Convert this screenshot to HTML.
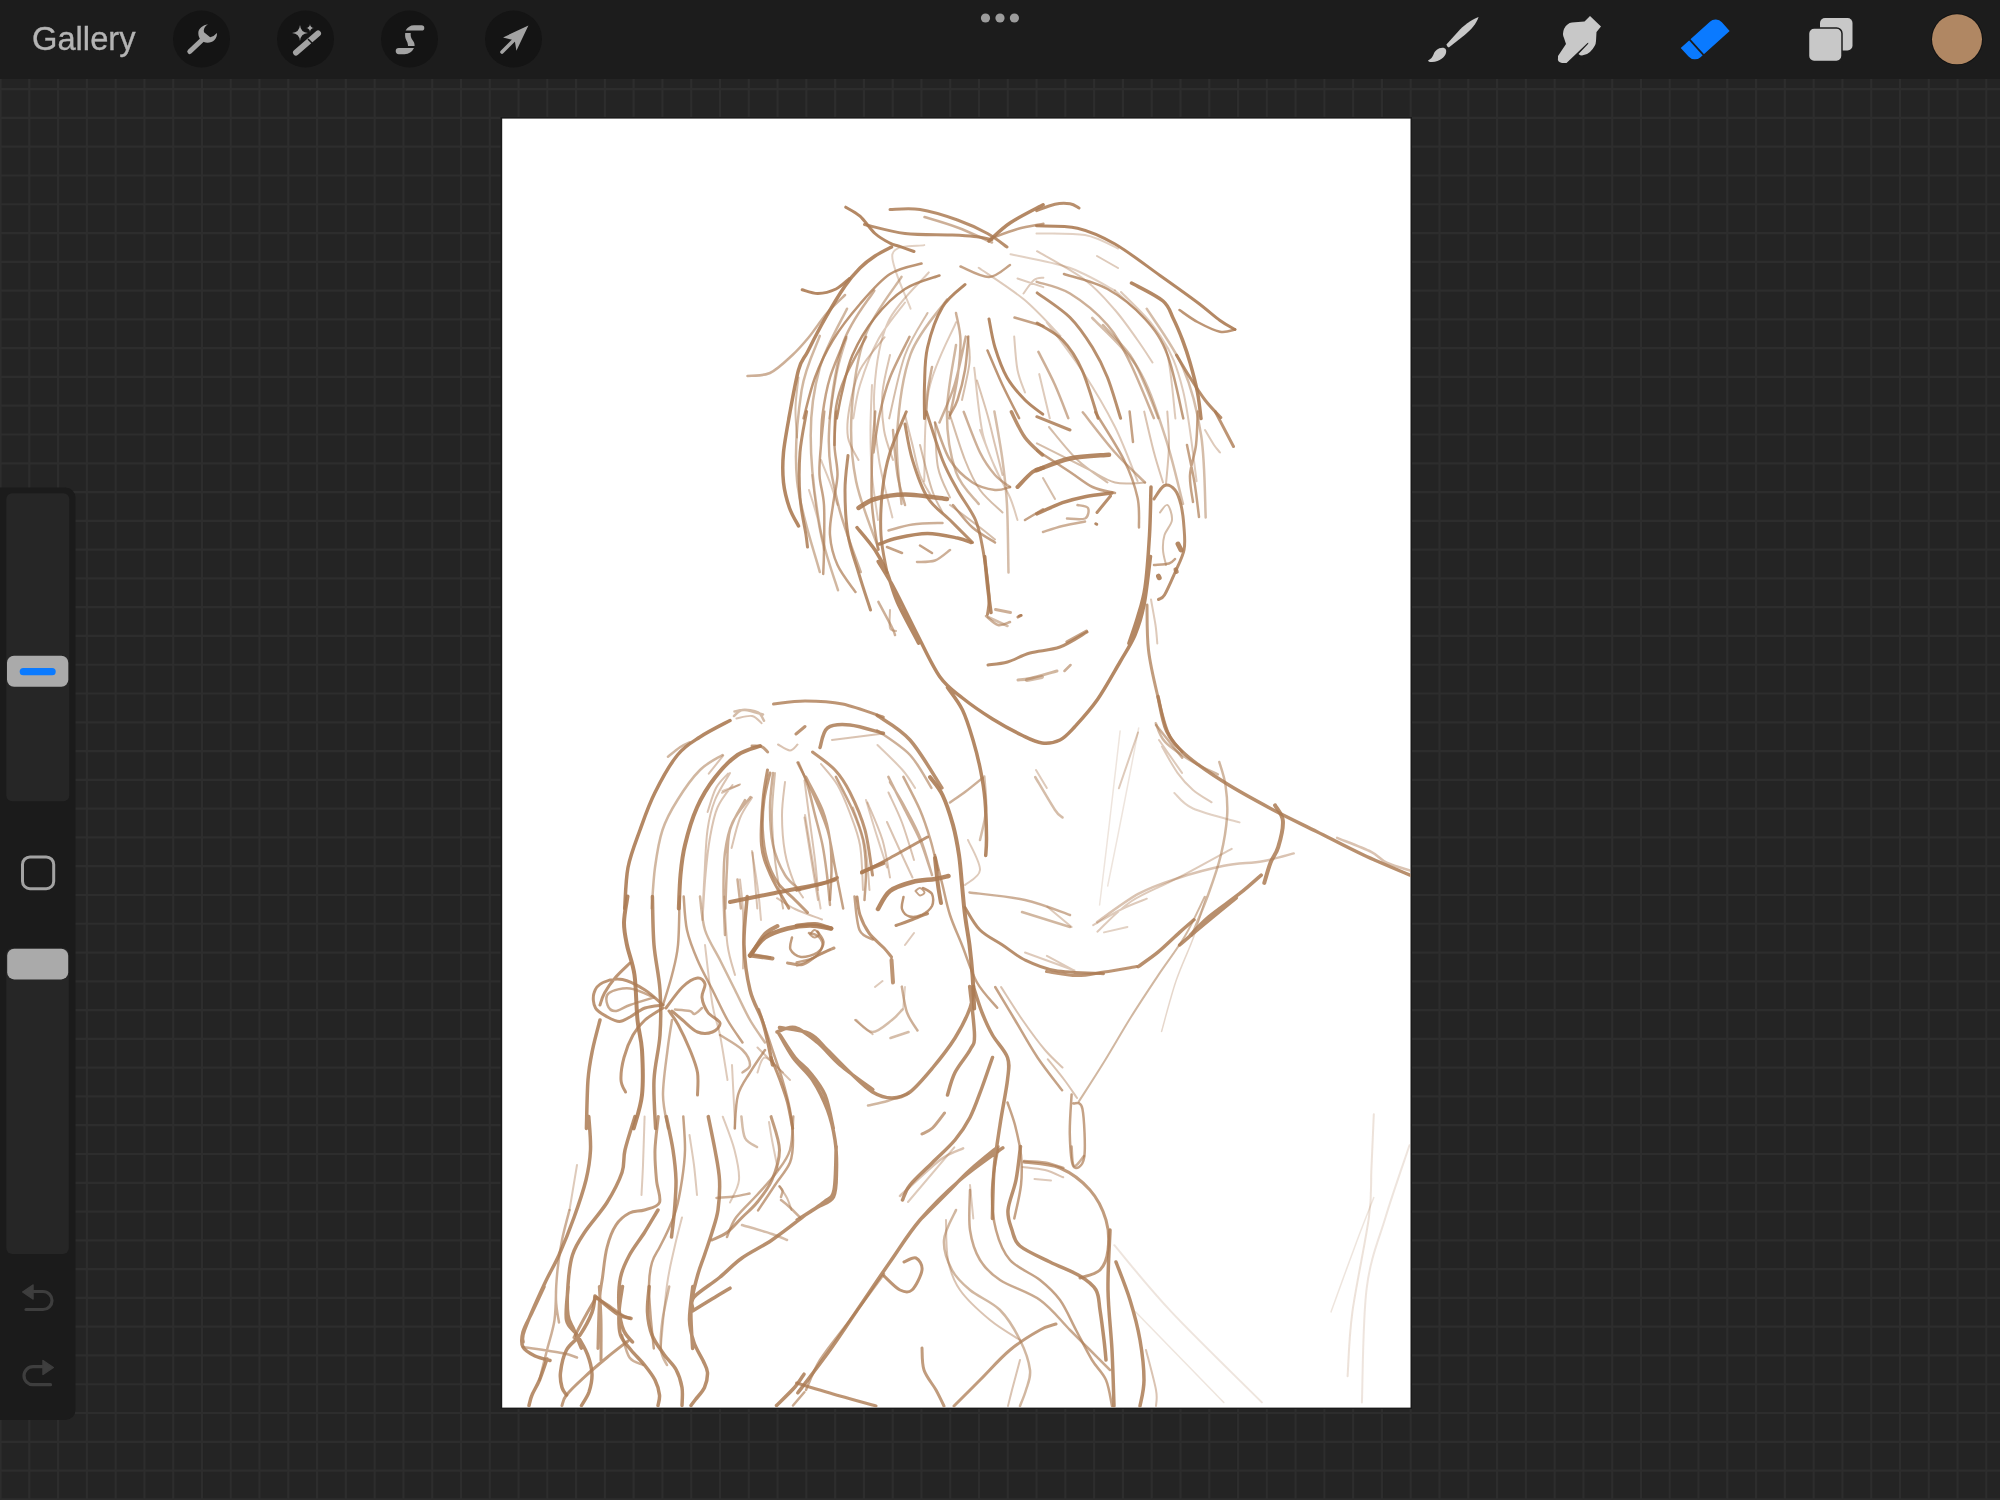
<!DOCTYPE html>
<html><head><meta charset="utf-8">
<style>
html,body{margin:0;padding:0;width:2000px;height:1500px;overflow:hidden;background:#242424;}
body{position:relative;font-family:"Liberation Sans",sans-serif;}
svg{position:absolute;left:0;top:0;}
</style></head><body>
<svg width="2000" height="1500" viewBox="0 0 2000 1500">
<rect x="0" y="0" width="2000" height="1500" fill="#242424"/>
<path d="M0.50 79V1500M29.28 79V1500M58.06 79V1500M86.84 79V1500M115.62 79V1500M144.40 79V1500M173.18 79V1500M201.96 79V1500M230.74 79V1500M259.52 79V1500M288.30 79V1500M317.08 79V1500M345.86 79V1500M374.64 79V1500M403.42 79V1500M432.20 79V1500M460.98 79V1500M489.76 79V1500M518.54 79V1500M547.32 79V1500M576.10 79V1500M604.88 79V1500M633.66 79V1500M662.44 79V1500M691.22 79V1500M720.00 79V1500M748.78 79V1500M777.56 79V1500M806.34 79V1500M835.12 79V1500M863.90 79V1500M892.68 79V1500M921.46 79V1500M950.24 79V1500M979.02 79V1500M1007.80 79V1500M1036.58 79V1500M1065.36 79V1500M1094.14 79V1500M1122.92 79V1500M1151.70 79V1500M1180.48 79V1500M1209.26 79V1500M1238.04 79V1500M1266.82 79V1500M1295.60 79V1500M1324.38 79V1500M1353.16 79V1500M1381.94 79V1500M1410.72 79V1500M1439.50 79V1500M1468.28 79V1500M1497.06 79V1500M1525.84 79V1500M1554.62 79V1500M1583.40 79V1500M1612.18 79V1500M1640.96 79V1500M1669.74 79V1500M1698.52 79V1500M1727.30 79V1500M1756.08 79V1500M1784.86 79V1500M1813.64 79V1500M1842.42 79V1500M1871.20 79V1500M1899.98 79V1500M1928.76 79V1500M1957.54 79V1500M1986.32 79V1500M0 89.14H2000M0 117.92H2000M0 146.70H2000M0 175.48H2000M0 204.26H2000M0 233.04H2000M0 261.82H2000M0 290.60H2000M0 319.38H2000M0 348.16H2000M0 376.94H2000M0 405.72H2000M0 434.50H2000M0 463.28H2000M0 492.06H2000M0 520.84H2000M0 549.62H2000M0 578.40H2000M0 607.18H2000M0 635.96H2000M0 664.74H2000M0 693.52H2000M0 722.30H2000M0 751.08H2000M0 779.86H2000M0 808.64H2000M0 837.42H2000M0 866.20H2000M0 894.98H2000M0 923.76H2000M0 952.54H2000M0 981.32H2000M0 1010.10H2000M0 1038.88H2000M0 1067.66H2000M0 1096.44H2000M0 1125.22H2000M0 1154.00H2000M0 1182.78H2000M0 1211.56H2000M0 1240.34H2000M0 1269.12H2000M0 1297.90H2000M0 1326.68H2000M0 1355.46H2000M0 1384.24H2000M0 1413.02H2000M0 1441.80H2000M0 1470.58H2000M0 1499.36H2000" stroke="#2d2d2d" stroke-width="2.2" fill="none"/>
<!-- top bar -->
<rect x="0" y="0" width="2000" height="79" fill="#1c1c1c"/>
<circle cx="201.5" cy="39" r="28.5" fill="#141414"/>
<circle cx="305.5" cy="39" r="28.5" fill="#141414"/>
<circle cx="409.5" cy="39" r="28.5" fill="#141414"/>
<circle cx="513.5" cy="39" r="28.5" fill="#141414"/>
<!-- wrench -->
<g fill="#a3a3a3">
<line x1="189.8" y1="51.5" x2="202" y2="40" stroke="#a3a3a3" stroke-width="5" stroke-linecap="round"/>
<path d="M207.9 24.3 C203 25 198.3 28.5 198.3 33 C198.3 39 202.5 42.8 207.5 42.8 C213 42.8 217.5 38.5 216.9 33 Q214 36.5 210.2 37.3 L204 32.3 C203.2 29.5 204.5 26.5 207.9 24.3Z"/>
</g>
<!-- wand -->
<g>
<line x1="296" y1="52.5" x2="318" y2="33.5" stroke="#a3a3a3" stroke-width="6" stroke-linecap="round"/>
<line x1="308" y1="39" x2="312.5" y2="43.5" stroke="#141414" stroke-width="1.5"/>
<path d="M300 25 Q300.6 32.4 308 33 Q300.6 33.6 300 41 Q299.4 33.6 292 33 Q299.4 32.4 300 25Z" fill="#a3a3a3"/>
<path d="M310 24 Q310.3 27.7 314 28 Q310.3 28.3 310 32 Q309.7 28.3 306 28 Q309.7 27.7 310 24Z" fill="#a3a3a3"/>
</g>
<!-- selection S -->
<g fill="#a3a3a3">
<path d="M405.6 30.6 Q408.5 25.3 414 25.2 L421.6 25.2 A2.7 2.7 0 0 1 421.6 30.6 Z"/>
<path d="M405.2 33 L410.7 33 C410.5 36.5 411 38 412.5 40 C414 42 414.7 43.5 414.6 45.9 L408 45.9 C408 43.5 407 41.5 406.2 40 C405 37.5 405 35.5 405.2 33 Z"/>
<path d="M398.8 48 L414 48 Q411 54 404.5 54.2 L398.8 54.2 A3.1 3.1 0 0 1 398.8 48 Z"/>
</g>
<!-- transform arrow -->
<g>
<line x1="502" y1="52" x2="513" y2="41" stroke="#a3a3a3" stroke-width="3.6" stroke-linecap="round"/>
<path d="M528.4 25.4 L503 37.5 L512 39.8 L515 42 L516.4 50.8 Z" fill="#a3a3a3"/>
</g>
<!-- dots -->
<circle cx="985.5" cy="18" r="4.6" fill="#9c9c9c"/>
<circle cx="1000" cy="18" r="4.6" fill="#9c9c9c"/>
<circle cx="1014.4" cy="18" r="4.6" fill="#9c9c9c"/>
<!-- brush -->
<g fill="#c8c8c8">
<path d="M1478.6 17 C1474 18.5 1466 23.5 1460 29.5 L1446.4 44.6 Q1447 47 1448.8 47.4 L1465 34.8 C1471 29.8 1476.5 23.5 1478.6 17 Z"/>
<path d="M1428 60.5 C1431 59 1432.5 57 1433.5 54.5 C1435 50.5 1438 48 1442.5 47.8 C1445.5 47.8 1446.8 50 1446 53 C1445 57 1440 61.5 1432 62 C1430 62.2 1428.5 61.6 1428 60.5 Z"/>
</g>
<!-- smudge -->
<path fill="#c8c8c8" d="M1558 58 Q1557 62 1562 63 L1566.5 63 L1587.5 43 Q1589 42 1588 44 L1578.5 54 Q1580 55.5 1582 55.5 Q1587 55 1590 52 Q1596 46 1596 41 L1596.5 32 L1601 26.5 L1590 16 L1584.5 21.5 L1572 22.5 Q1567 23 1564 29 Q1562 34 1564 38 L1566 44 L1558 56 Z"/>
<!-- eraser -->
<g transform="translate(1705.2 39.4) rotate(-42) scale(1.06)">
<path fill="#0a7aff" d="M-22.5 -9.5 L14.5 -9.5 A8 8 0 0 1 22.5 -1.5 L22.5 9.5 L-14.5 9.5 A8 8 0 0 1 -22.5 1.5 Z"/>
<line x1="-11" y1="-10" x2="-11" y2="10" stroke="#1c1c1c" stroke-width="1.6"/>
</g>
<!-- layers -->
<rect x="1820" y="18" width="32.5" height="32.5" rx="5" fill="#c8c8c8"/>
<rect x="1808.5" y="28" width="33.5" height="33.5" rx="5.5" fill="#c8c8c8" stroke="#1c1c1c" stroke-width="1.5"/>
<!-- color -->
<circle cx="1957" cy="39.3" r="26" fill="#121212"/>
<circle cx="1957" cy="39.3" r="25" fill="#b08763"/>
<!-- sidebar -->
<rect x="-12" y="487.5" width="87.5" height="932.5" rx="10" fill="#1b1b1b"/>
<rect x="6.3" y="493.3" width="63" height="308" rx="6" fill="#262626"/>
<rect x="7" y="655.8" width="61.3" height="31" rx="7" fill="#aaaaaa"/>
<rect x="19.7" y="668" width="36" height="7.3" rx="3.6" fill="#0a7aff"/>
<rect x="22.5" y="856.9" width="31.2" height="31.8" rx="7.5" fill="none" stroke="#a3a3a3" stroke-width="3"/>
<rect x="6.3" y="948" width="62.5" height="306" rx="6" fill="#262626"/>
<rect x="7.2" y="948.7" width="61" height="30.7" rx="7" fill="#aaaaaa"/>
<g fill="none" stroke="#3e3e3e" stroke-width="3.2" stroke-linecap="round">
<path d="M26 1309.5 L43 1309.5 A9 9 0 0 0 43 1291.5 L32 1291.5"/>
<path d="M50.5 1384.7 L33 1384.7 A9 9 0 0 1 33 1366.7 L44 1366.7"/>
</g>
<path d="M22.7 1292 L33 1285 L33 1299 Z" fill="#3e3e3e" stroke="#3e3e3e" stroke-width="1.5" stroke-linejoin="round"/>
<path d="M53.3 1367.5 L43 1360.5 L43 1374.5 Z" fill="#3e3e3e" stroke="#3e3e3e" stroke-width="1.5" stroke-linejoin="round"/>
<!-- canvas -->
<rect x="500.5" y="117" width="911.5" height="1292" fill="#1a1a1a"/>
<rect x="502.2" y="118.6" width="908.3" height="1289" fill="#ffffff"/>
<defs><filter id="sb" x="-5%" y="-5%" width="110%" height="110%"><feGaussianBlur stdDeviation="0.5"/></filter></defs><g clip-path="url(#cv)"><g filter="url(#sb)"><defs><clipPath id="cv"><rect x="502.2" y="118.6" width="908.3" height="1289"/></clipPath></defs>
<path fill="none" stroke="#ac7b53" stroke-width="3" stroke-opacity="0.9" stroke-linecap="round" stroke-linejoin="round" d="M845.7 207.2C848.1 208.7 855.1 211.9 860.0 216.2C864.9 220.6 870.0 229.0 875.0 233.5C880.0 238.0 886.0 241.1 890.0 243.2C894.0 245.4 895.0 244.9 899.0 246.2C903.0 247.6 911.5 250.6 914.0 251.5M802.2 289.7C804.9 290.4 812.4 293.6 818.0 293.5C823.6 293.4 830.7 291.5 836.0 289.0C841.2 286.5 847.2 280.2 849.5 278.5M965.0 284.5C961.2 288.2 948.7 296.5 942.5 307.0C936.2 317.5 930.5 334.5 927.5 347.5C924.5 360.5 925.0 373.2 924.5 385.0C924.0 396.8 924.5 412.9 924.5 418.5M989.0 319.0C990.0 323.7 992.0 337.7 995.0 347.5C998.0 357.2 1002.0 368.7 1007.0 377.5C1012.0 386.2 1019.0 393.9 1025.0 400.0C1031.0 406.1 1039.8 411.8 1042.7 414.2M1036.5 225.8C1043.3 226.2 1064.4 225.2 1077.5 228.2C1090.6 231.3 1101.2 236.1 1115.0 244.0C1128.7 251.9 1146.2 265.7 1160.0 275.5C1173.7 285.2 1187.5 295.0 1197.5 302.5C1207.5 310.0 1213.7 316.0 1220.0 320.5C1226.2 325.0 1232.5 328.0 1235.0 329.5M1095.8 523.7L1096.7 524.2"/>
<path fill="none" stroke="#ac7b53" stroke-width="3.5" stroke-opacity="0.9" stroke-linecap="round" stroke-linejoin="round" d="M891.5 247.0C888.7 248.5 880.2 252.5 875.0 256.0C869.7 259.5 865.0 263.0 860.0 268.0C855.0 273.0 851.0 277.2 845.0 286.0C839.0 294.7 830.2 309.5 824.0 320.5C817.7 331.5 811.7 343.7 807.5 352.0C803.2 360.2 801.6 358.9 798.5 370.0C795.4 381.1 790.4 410.4 788.8 418.4M989.0 241.0C992.5 238.0 1001.0 229.0 1010.0 223.0C1019.0 217.0 1037.6 207.8 1043.1 204.8M1131.5 283.0C1136.7 286.0 1156.0 295.0 1163.0 301.0C1170.0 307.0 1170.2 312.5 1173.5 319.0C1176.7 325.5 1179.7 332.7 1182.5 340.0C1185.2 347.2 1187.5 353.7 1190.0 362.5C1192.5 371.2 1195.7 383.2 1197.5 392.5C1199.3 401.8 1200.4 414.1 1201.0 418.5M790.1 411.5C789.0 418.4 784.6 440.7 783.5 452.5C782.4 464.3 782.5 473.2 783.5 482.5C784.5 491.7 787.0 500.7 789.5 508.0C792.0 515.2 797.0 523.0 798.5 526.0M857.0 527.5C860.0 531.2 870.0 542.5 875.0 550.0C880.0 557.5 883.2 563.7 887.0 572.5C890.7 581.2 892.2 590.7 897.5 602.5C902.8 614.3 915.1 636.3 918.6 643.1M879.5 544.0C882.5 543.0 889.5 539.7 897.5 538.0C905.5 536.2 917.5 533.5 927.5 533.5C937.5 533.5 950.2 536.5 957.5 538.0C964.7 539.5 968.7 541.7 971.0 542.5M1036.8 513.9C1041.1 512.0 1054.5 505.6 1062.5 502.7C1070.5 499.9 1076.7 498.4 1085.0 496.7C1093.2 495.1 1107.5 493.6 1112.0 493.0M1151.0 487.0C1150.7 495.0 1150.5 518.2 1149.5 535.0C1148.5 551.7 1147.0 573.7 1145.0 587.5C1143.0 601.2 1140.2 608.2 1137.5 617.5C1134.8 626.8 1130.3 639.0 1128.9 643.3M878.2 561.5C881.0 566.2 888.5 577.7 895.0 590.0C901.5 602.3 910.0 620.5 917.5 635.0C925.0 649.5 932.5 666.5 940.0 677.0C947.5 687.5 953.7 691.0 962.5 698.0C971.2 705.0 982.5 712.7 992.5 719.0C1002.5 725.2 1014.2 731.5 1022.5 735.5C1030.7 739.5 1035.7 742.2 1042.0 743.0C1048.2 743.7 1054.5 742.7 1060.0 740.0C1065.5 737.2 1068.7 733.2 1075.0 726.5C1081.2 719.7 1090.0 710.2 1097.5 699.5C1105.0 688.7 1113.7 672.7 1120.0 662.0C1126.2 651.2 1131.0 644.5 1135.0 635.0C1139.0 625.5 1141.4 618.1 1144.0 605.0C1146.6 591.9 1149.4 564.6 1150.5 556.5M947.5 687.5C950.0 691.2 958.2 701.2 962.5 710.0C966.7 718.7 970.0 730.0 973.0 740.0C976.0 750.0 978.5 760.0 980.5 770.0C982.5 780.0 984.0 788.7 985.0 800.0C986.0 811.2 986.4 828.2 986.5 837.5C986.6 846.7 985.9 852.5 985.7 855.5M984.7 556.5C985.2 562.1 986.9 580.7 988.0 590.0C989.1 599.3 990.5 608.7 991.0 612.5M730.0 720.5C725.0 723.2 708.7 731.2 700.0 737.0C691.2 742.7 685.0 745.7 677.5 755.0C670.0 764.2 661.2 780.0 655.0 792.5C648.7 805.0 644.5 817.5 640.0 830.0C635.5 842.5 630.5 854.4 628.0 867.5C625.5 880.6 625.3 901.7 624.7 908.5"/>
<path fill="none" stroke="#ac7b53" stroke-width="2.5" stroke-opacity="0.6" stroke-linecap="round" stroke-linejoin="round" d="M747.5 376.0C751.2 375.5 762.5 376.5 770.0 373.0C777.5 369.5 786.0 361.0 792.5 355.0C799.0 349.0 803.2 344.0 809.0 337.0C814.7 330.0 821.0 320.0 827.0 313.0C833.0 306.0 842.0 298.0 845.0 295.0M924.5 217.0C930.0 218.7 946.2 223.2 957.5 227.5C968.7 231.7 986.2 240.0 992.0 242.5M956.0 313.0C956.7 317.5 960.2 329.2 960.5 340.0C960.7 350.7 959.4 364.4 957.5 377.5C955.6 390.6 950.7 411.6 949.3 418.4M965.8 336.6C963.9 344.7 958.9 370.7 954.5 385.0C950.1 399.3 942.0 416.2 939.5 422.5M932.0 367.0C931.2 371.2 928.5 384.5 927.5 392.5C926.5 400.5 926.2 411.2 926.0 415.0M874.3 290.5C869.0 299.6 850.1 320.8 842.5 345.0C834.9 369.2 829.6 409.3 828.9 435.8C828.1 462.3 832.7 481.2 838.0 503.9C843.3 526.6 856.9 560.7 860.7 572.0M1036.7 281.8C1042.2 283.8 1058.2 286.3 1070.0 293.5C1081.8 300.7 1097.5 313.5 1107.5 325.0C1117.5 336.5 1122.3 347.0 1130.0 362.5C1137.7 378.0 1149.9 408.9 1153.9 418.2M1038.4 351.9C1041.2 357.4 1050.0 373.9 1055.0 385.0C1060.0 396.1 1066.1 412.7 1068.3 418.2M888.5 530.5C892.5 529.5 903.5 525.7 912.5 524.5C921.5 523.2 937.5 523.2 942.5 523.0M917.0 562.0C920.0 561.7 929.5 562.5 935.0 560.5C940.5 558.5 947.5 551.7 950.0 550.0M963.7 411.8C966.4 418.5 974.8 442.0 980.0 452.5C985.2 463.0 990.0 469.2 995.0 475.0C1000.0 480.7 1007.5 485.0 1010.0 487.0M986.0 616.0C988.0 617.5 994.0 624.0 998.0 625.0C1002.0 626.0 1008.0 622.5 1010.0 622.0M893.0 430.0C893.7 437.5 895.5 462.5 897.5 475.0C899.5 487.5 903.7 500.0 905.0 505.0M1077.5 505.0C1079.2 505.5 1086.7 505.7 1088.0 508.0C1089.2 510.2 1088.5 516.7 1085.0 518.5C1081.5 520.2 1070.0 518.5 1067.0 518.5M1043.0 532.0C1046.2 531.0 1055.5 527.7 1062.5 526.0C1069.5 524.2 1081.2 522.2 1085.0 521.5M1082.8 412.3C1088.2 419.0 1104.6 440.8 1115.0 452.5C1125.4 464.2 1140.0 477.5 1145.0 482.5M1064.5 671.0L1070.5 665.0M878.4 601.9C880.6 606.2 889.2 622.0 892.0 627.5C894.8 633.0 894.5 633.7 895.0 635.0M877.2 730.4C882.7 734.5 901.0 745.4 910.0 755.0C919.0 764.6 927.8 782.4 931.4 787.9M1156.0 725.0L1182.2 757.7M745.0 800.0C742.5 805.0 733.0 818.7 730.0 830.0C727.0 841.2 727.8 854.4 727.0 867.5C726.2 880.6 725.6 901.7 725.4 908.5M737.5 879.5L740.9 908.5M969.5 892.5C978.7 893.7 1008.2 896.2 1025.0 900.0C1041.7 903.7 1062.5 912.5 1070.0 915.0M888.4 776.9C891.2 782.4 899.7 799.5 905.0 810.0C910.3 820.5 915.7 830.0 920.0 840.0C924.2 850.0 928.7 865.0 930.5 870.0M950.0 802.5C952.5 800.7 959.5 796.1 965.0 792.0C970.5 787.9 979.8 780.2 982.7 777.8M750.5 797.0C747.5 801.2 736.7 813.2 732.5 822.5C728.2 831.7 726.5 841.2 725.0 852.5C723.5 863.7 723.5 876.2 723.5 890.0C723.5 903.7 724.7 927.5 725.0 935.0M773.0 773.0C772.5 778.7 770.0 795.5 770.0 807.5C770.0 819.5 770.5 833.7 773.0 845.0C775.5 856.2 780.5 867.5 785.0 875.0C789.5 882.5 797.5 887.5 800.0 890.0M890.0 782.0C892.5 786.2 900.0 798.2 905.0 807.5C910.0 816.7 915.5 826.2 920.0 837.5C924.5 848.7 930.0 868.7 932.0 875.0M675.0 1009.5C677.5 1009.7 686.7 1010.2 690.0 1011.0C693.2 1011.7 692.5 1014.5 694.5 1014.0C696.5 1013.5 700.7 1009.0 702.0 1008.0M720.0 1035.0C723.7 1037.5 737.5 1045.0 742.5 1050.0C747.5 1055.0 750.0 1061.2 750.0 1065.0C750.0 1068.7 743.7 1071.2 742.5 1072.5M672.0 1020.0C671.2 1025.0 669.0 1037.5 667.5 1050.0C666.0 1062.5 662.9 1081.9 663.0 1095.0C663.1 1108.1 667.2 1122.9 668.0 1128.5M901.8 986.6C902.7 990.9 904.4 1005.2 907.0 1012.5C909.6 1019.8 915.7 1027.5 917.5 1030.5M779.5 1186.5C780.0 1187.2 782.2 1189.2 782.5 1191.0C782.7 1192.7 781.2 1196.0 781.0 1197.0M781.0 1200.0C782.5 1201.2 786.8 1204.6 790.0 1207.5C793.2 1210.4 798.3 1215.8 800.0 1217.5M569.5 1210.0C568.2 1215.0 564.0 1230.0 562.0 1240.0C560.0 1250.0 558.5 1260.0 557.5 1270.0C556.5 1280.0 555.7 1291.2 556.0 1300.0C556.2 1308.7 558.5 1318.7 559.0 1322.5M716.5 1198.0C719.5 1197.7 729.0 1197.2 734.5 1196.5C740.0 1195.7 747.0 1194.0 749.5 1193.5M1071.6 1146.5C1072.0 1149.8 1071.9 1164.4 1074.0 1166.0C1076.1 1167.6 1082.3 1157.7 1084.0 1156.0M556.2 1286.5C555.9 1292.1 556.0 1309.4 554.5 1320.0C553.0 1330.6 549.5 1340.0 547.0 1350.0C544.5 1360.0 540.7 1375.0 539.5 1380.0M523.0 1347.0C529.5 1348.0 553.0 1351.2 562.0 1353.0C571.0 1354.7 574.5 1356.7 577.0 1357.5M622.0 1335.0C623.2 1338.7 626.0 1352.5 629.5 1357.5C633.0 1362.5 640.7 1363.7 643.0 1365.0"/>
<path fill="none" stroke="#ac7b53" stroke-width="3" stroke-opacity="0.85" stroke-linecap="round" stroke-linejoin="round" d="M890.0 209.5C895.0 209.5 908.7 207.7 920.0 209.5C931.2 211.2 946.2 216.0 957.5 220.0C968.7 224.0 979.2 229.0 987.5 233.5C995.7 238.0 1003.7 244.7 1007.0 247.0M864.5 224.5C871.2 226.0 890.7 231.7 905.0 233.5C919.2 235.2 938.5 234.5 950.0 235.0C961.5 235.5 967.0 235.7 974.0 236.5C981.0 237.2 989.0 239.0 992.0 239.5M1036.7 210.7C1039.7 209.6 1049.4 205.4 1055.0 204.2C1060.6 203.1 1066.0 203.2 1070.0 203.8C1074.0 204.4 1077.5 207.3 1079.0 208.0M1176.5 355.0C1178.7 358.7 1185.2 370.0 1190.0 377.5C1194.7 385.0 1199.9 393.3 1205.0 400.0C1210.1 406.7 1218.2 414.7 1220.8 417.6M1037.2 292.9C1042.7 297.0 1060.8 308.4 1070.0 317.5C1079.2 326.6 1086.2 337.5 1092.5 347.5C1098.7 357.5 1102.8 365.7 1107.5 377.5C1112.2 389.3 1118.4 411.5 1120.6 418.3M1037.1 323.1C1041.3 325.9 1055.0 332.2 1062.5 340.0C1070.0 347.8 1076.1 356.9 1082.0 370.0C1087.9 383.1 1095.4 410.3 1098.1 418.3M806.6 411.5C805.5 418.4 801.1 438.2 800.0 452.5C798.9 466.8 799.0 483.7 800.0 497.5C801.0 511.2 804.7 526.7 806.0 535.0C807.2 543.2 807.2 545.0 807.5 547.0M848.0 455.5C847.5 461.2 845.0 476.7 845.0 490.0C845.0 503.2 845.7 521.2 848.0 535.0C850.2 548.7 854.7 560.0 858.5 572.5C862.2 585.0 868.5 603.7 870.5 610.0M906.3 411.8C903.6 418.5 894.0 439.5 890.0 452.5C886.0 465.5 884.0 476.2 882.5 490.0C881.0 503.7 880.2 521.2 881.0 535.0C881.7 548.7 886.0 566.2 887.0 572.5M905.0 424.0C906.2 430.0 908.7 447.7 912.5 460.0C916.2 472.2 921.2 487.5 927.5 497.5C933.7 507.5 942.5 512.5 950.0 520.0C957.5 527.5 968.7 538.7 972.5 542.5M926.4 411.7C929.1 419.7 937.3 446.9 942.5 460.0C947.7 473.1 952.0 480.0 957.5 490.0C963.0 500.0 971.2 510.0 975.5 520.0C979.7 530.0 980.7 537.5 983.0 550.0C985.2 562.5 988.2 584.2 989.0 595.0C989.7 605.7 987.7 611.2 987.5 614.5M1097.0 512.5L1110.5 496.0M1036.8 416.7L1070.0 430.0M1154.0 499.0C1155.7 496.7 1161.0 487.0 1164.5 485.5C1168.0 484.0 1172.2 486.7 1175.0 490.0C1177.7 493.2 1179.5 498.7 1181.0 505.0C1182.5 511.2 1183.5 520.0 1184.0 527.5C1184.5 535.0 1185.5 542.5 1184.0 550.0C1182.5 557.5 1178.2 565.0 1175.0 572.5C1171.7 580.0 1167.2 590.5 1164.5 595.0C1161.7 599.5 1159.5 598.7 1158.5 599.5M988.0 665.0C991.2 664.5 1000.5 664.0 1007.5 662.0C1014.5 660.0 1021.2 655.5 1030.0 653.0C1038.7 650.5 1050.5 650.5 1060.0 647.0C1069.5 643.5 1082.5 634.5 1087.0 632.0M965.0 907.5C967.5 911.2 973.7 923.7 980.0 930.0C986.2 936.2 995.0 940.0 1002.5 945.0C1010.0 950.0 1016.2 955.7 1025.0 960.0C1033.7 964.2 1041.9 968.2 1055.0 970.5C1068.1 972.8 1095.4 973.2 1103.5 973.7M896.0 925.5C898.7 924.5 907.2 921.5 912.5 919.5C917.7 917.5 925.0 914.5 927.5 913.5"/>
<path fill="none" stroke="#ac7b53" stroke-width="2.5" stroke-opacity="0.7" stroke-linecap="round" stroke-linejoin="round" d="M992.0 238.0C996.2 236.5 1008.9 231.4 1017.5 229.0C1026.1 226.6 1039.1 224.7 1043.4 223.8M1014.5 317.5L1043.4 326.0M960.5 266.5C965.2 268.2 980.7 277.2 989.0 277.0C997.2 276.7 1006.5 267.0 1010.0 265.0M846.3 336.8C843.6 343.5 834.0 364.5 830.0 377.5C826.0 390.5 824.0 403.7 822.5 415.0C821.0 426.2 821.2 440.0 821.0 445.0M909.5 336.8C906.3 343.6 895.0 364.5 890.0 377.5C885.0 390.5 882.2 402.5 879.5 415.0C876.7 427.5 874.5 446.2 873.5 452.5M968.3 336.5C967.8 342.1 966.8 359.4 965.0 370.0C963.2 380.6 960.0 392.5 957.5 400.0C955.0 407.5 951.2 412.5 950.0 415.0M953.0 505.0C956.2 508.7 965.5 521.2 972.5 527.5C979.5 533.7 991.2 540.0 995.0 542.5M824.3 411.5C823.8 417.1 821.8 434.4 821.0 445.0C820.2 455.6 819.0 465.0 819.5 475.0C820.0 485.0 823.2 492.5 824.0 505.0C824.7 517.5 824.1 538.5 824.0 550.0C823.9 561.5 823.4 570.0 823.2 574.0M836.2 411.5C835.9 417.1 834.3 434.4 834.5 445.0C834.7 455.6 837.7 465.0 837.5 475.0C837.2 485.0 834.2 495.0 833.0 505.0C831.7 515.0 829.2 525.0 830.0 535.0C830.7 545.0 833.2 555.5 837.5 565.0C841.7 574.5 852.5 587.5 855.5 592.0M887.0 547.0L902.0 553.0M920.0 545.5L932.0 553.0M875.2 411.5C874.7 419.6 872.5 444.4 872.0 460.0C871.5 475.6 871.0 490.0 872.0 505.0C873.0 520.0 877.0 542.5 878.0 550.0M1025.0 520.0L1043.0 509.2M1037.1 450.6C1042.6 454.2 1060.8 465.9 1070.0 472.0C1079.2 478.1 1085.0 483.5 1092.5 487.0C1100.0 490.5 1111.2 492.0 1115.0 493.0M1154.0 565.0C1156.5 564.7 1165.5 564.5 1169.0 563.5C1172.5 562.5 1174.0 559.7 1175.0 559.0M1187.0 445.0C1188.2 451.2 1192.5 470.5 1194.5 482.5C1196.5 494.5 1198.2 511.2 1199.0 517.0M1197.7 411.5C1197.4 417.1 1197.3 434.4 1196.0 445.0C1194.7 455.6 1190.5 465.5 1190.0 475.0C1189.5 484.5 1192.5 497.5 1193.0 502.0M1129.6 411.5L1133.0 442.0M1095.2 412.0C1100.0 420.0 1116.9 445.7 1124.0 460.0C1131.0 474.2 1135.0 486.2 1137.5 497.5C1140.0 508.7 1138.7 522.5 1139.0 527.5M797.5 762.5C800.0 767.5 807.5 781.2 812.5 792.5C817.5 803.7 823.7 817.5 827.5 830.0C831.2 842.5 832.4 854.4 835.0 867.5C837.6 880.6 841.8 901.6 843.2 908.4M935.0 855.0C936.2 860.0 940.0 875.0 942.5 885.0C945.0 895.0 946.7 905.0 950.0 915.0C953.2 925.0 957.5 933.7 962.0 945.0C966.5 956.2 971.1 972.0 977.0 982.5C982.9 993.0 993.8 1003.5 997.2 1007.7M809.0 933.0C810.5 933.5 815.7 934.0 818.0 936.0C820.2 938.0 823.0 941.5 822.5 945.0C822.0 948.5 819.3 954.1 815.0 957.0C810.7 959.9 799.7 961.6 796.6 962.5M835.9 776.9C838.7 782.4 848.0 799.5 852.5 810.0C857.0 820.5 860.7 830.0 863.0 840.0C865.2 850.0 865.7 860.0 866.0 870.0C866.2 880.0 864.7 895.0 864.5 900.0M805.9 776.9C808.7 782.4 818.5 799.5 822.5 810.0C826.5 820.5 828.5 830.0 830.0 840.0C831.5 850.0 831.5 860.0 831.5 870.0C831.5 880.0 830.2 895.0 830.0 900.0M679.6 896.5C679.3 904.6 679.3 931.9 678.0 945.0C676.7 958.1 674.5 965.0 672.0 975.0C669.5 985.0 664.5 1000.0 663.0 1005.0M683.7 896.5C684.2 902.1 684.7 919.4 687.0 930.0C689.3 940.6 693.2 950.0 697.5 960.0C701.7 970.0 707.5 980.0 712.5 990.0C717.5 1000.0 722.5 1011.2 727.5 1020.0C732.5 1028.7 740.0 1038.7 742.5 1042.5M765.0 1050.0C762.5 1053.7 754.5 1065.0 750.0 1072.5C745.5 1080.0 740.6 1085.7 738.0 1095.0C735.4 1104.3 735.2 1122.9 734.7 1128.5M854.5 896.5C855.3 902.1 856.4 922.8 859.5 930.0C862.6 937.2 870.6 937.9 872.8 939.5M758.9 1009.2C760.3 1013.5 764.8 1026.9 767.5 1035.0C770.2 1043.1 772.5 1050.0 775.0 1057.5C777.5 1065.0 780.0 1071.2 782.5 1080.0C785.0 1088.7 788.2 1100.0 790.0 1110.0C791.7 1120.0 793.0 1131.2 793.0 1140.0C793.0 1148.7 793.0 1155.0 790.0 1162.5C787.0 1170.0 780.3 1177.0 775.0 1185.0C769.7 1193.0 760.9 1206.2 758.1 1210.4M1007.5 1102.5C1008.7 1106.2 1012.7 1116.2 1015.0 1125.0C1017.2 1133.7 1020.0 1145.0 1021.0 1155.0C1022.0 1165.0 1022.1 1174.4 1021.0 1185.0C1019.9 1195.6 1015.4 1212.9 1014.3 1218.4M995.2 987.0C998.5 992.5 1007.9 1008.2 1015.0 1020.0C1022.0 1031.7 1029.6 1045.8 1037.5 1057.5C1045.3 1069.2 1058.0 1084.8 1062.1 1090.3M683.3 1116.5C683.6 1122.1 685.2 1139.4 685.0 1150.0C684.8 1160.6 683.5 1170.0 682.0 1180.0C680.5 1190.0 678.5 1201.2 676.0 1210.0C673.5 1218.7 669.7 1226.2 667.0 1232.5C664.2 1238.7 662.0 1242.5 659.5 1247.5C657.0 1252.5 653.7 1256.2 652.0 1262.5C650.2 1268.7 649.2 1276.2 649.0 1285.0C648.7 1293.7 649.7 1304.4 650.5 1315.0C651.3 1325.6 653.3 1342.9 653.8 1348.5M1071.6 1094.4C1071.3 1101.0 1069.5 1122.0 1069.8 1134.0C1070.1 1146.0 1071.0 1162.5 1073.4 1166.4C1075.8 1170.3 1082.7 1167.0 1084.2 1157.4C1085.7 1147.8 1084.2 1117.8 1082.4 1108.8C1080.6 1099.8 1074.9 1104.3 1073.4 1103.4M998.5 1146.5C997.4 1153.8 992.4 1176.1 992.0 1190.0C991.6 1203.9 993.0 1218.3 996.0 1230.0C999.0 1241.7 1002.7 1251.7 1010.0 1260.0C1017.3 1268.3 1031.7 1273.3 1040.0 1280.0C1048.3 1286.7 1054.0 1291.7 1060.0 1300.0C1066.0 1308.3 1070.7 1320.0 1076.0 1330.0C1081.3 1340.0 1087.0 1351.7 1092.0 1360.0C1097.0 1368.3 1102.7 1372.3 1106.0 1380.0C1109.3 1387.7 1111.0 1401.7 1112.0 1406.0"/>
<path fill="none" stroke="#ac7b53" stroke-width="2.5" stroke-opacity="0.8" stroke-linecap="round" stroke-linejoin="round" d="M921.5 263.5C916.2 265.2 900.2 267.2 890.0 274.0C879.7 280.7 869.5 293.0 860.0 304.0C850.5 315.0 840.5 327.7 833.0 340.0C825.5 352.2 819.9 364.4 815.0 377.5C810.1 390.6 805.5 411.6 803.6 418.4M987.5 350.5C990.0 356.2 997.2 373.7 1002.5 385.0C1007.8 396.3 1016.3 412.6 1019.1 418.1M1235.0 329.5C1232.5 329.9 1226.2 333.0 1220.0 331.7C1213.7 330.5 1204.2 325.6 1197.5 322.0C1190.7 318.4 1182.5 312.0 1179.5 310.0M1019.0 616.0L1021.2 615.2M903.5 897.0C903.2 899.0 901.0 905.7 902.0 909.0C903.0 912.2 906.2 915.5 909.5 916.5C912.7 917.5 917.7 916.7 921.5 915.0C925.2 913.2 930.2 909.5 932.0 906.0C933.7 902.5 933.5 897.0 932.0 894.0C930.5 891.0 924.5 889.0 923.0 888.0"/>
<path fill="none" stroke="#ac7b53" stroke-width="2.5" stroke-opacity="0.85" stroke-linecap="round" stroke-linejoin="round" d="M939.5 275.5C933.7 277.7 915.7 282.0 905.0 289.0C894.2 296.0 883.7 306.5 875.0 317.5C866.2 328.5 858.0 342.5 852.5 355.0C847.0 367.5 844.6 381.9 842.0 392.5C839.4 403.1 837.7 414.1 836.8 418.4"/>
<path fill="none" stroke="#ac7b53" stroke-width="2" stroke-opacity="0.5" stroke-linecap="round" stroke-linejoin="round" d="M968.0 337.0C968.2 341.2 970.5 352.0 969.5 362.5C968.5 373.0 963.2 393.7 962.0 400.0M846.5 338.5C845.0 343.7 840.3 356.7 837.5 370.0C834.7 383.3 830.8 410.4 829.4 418.5M927.5 313.0C923.7 320.0 911.4 337.4 905.0 355.0C898.6 372.6 891.8 407.8 889.2 418.4M798.5 377.5C798.0 382.5 795.7 397.5 795.5 407.5C795.2 417.5 796.7 432.5 797.0 437.5M948.9 411.7C951.6 419.7 959.8 446.9 965.0 460.0C970.2 473.1 973.7 481.2 980.0 490.0C986.2 498.7 998.7 508.7 1002.5 512.5M950.0 505.0C955.0 508.7 972.5 521.7 980.0 527.5C987.5 533.2 992.5 537.5 995.0 539.5M935.0 422.5C935.5 430.0 935.5 455.0 938.0 467.5C940.5 480.0 948.0 492.5 950.0 497.5M920.0 445.0C922.0 452.5 928.2 478.7 932.0 490.0C935.7 501.2 940.7 508.7 942.5 512.5M890.0 610.0C890.0 613.0 889.0 624.5 890.0 628.0C891.0 631.5 895.0 630.5 896.0 631.0M1049.0 427.0C1053.7 432.5 1067.7 450.7 1077.5 460.0C1087.2 469.2 1102.5 478.7 1107.5 482.5M1043.0 478.0L1055.0 499.0M1160.0 512.5C1161.2 511.2 1165.5 503.7 1167.5 505.0C1169.5 506.2 1172.5 515.0 1172.0 520.0C1171.5 525.0 1166.0 530.0 1164.5 535.0C1163.0 540.0 1162.7 545.0 1163.0 550.0C1163.2 555.0 1165.5 562.5 1166.0 565.0M1036.9 443.4C1044.9 447.4 1072.0 461.0 1085.0 467.5C1098.0 474.0 1105.0 480.0 1115.0 482.5C1125.0 485.0 1140.0 482.5 1145.0 482.5M775.0 773.0C774.5 780.0 772.0 800.5 772.0 815.0C772.0 829.5 773.2 844.4 775.0 860.0C776.8 875.6 781.7 900.4 783.1 908.5M779.5 1186.0C780.7 1188.0 785.0 1194.0 787.0 1198.0C789.0 1202.0 790.7 1208.0 791.5 1210.0"/>
<path fill="none" stroke="#ac7b53" stroke-width="2" stroke-opacity="0.4" stroke-linecap="round" stroke-linejoin="round" d="M905.0 302.5C900.5 308.7 885.5 326.2 878.0 340.0C870.5 353.7 864.1 371.9 860.0 385.0C855.9 398.1 854.4 412.9 853.3 418.4M1023.5 293.5C1025.2 291.2 1030.7 282.6 1034.0 280.0C1037.3 277.4 1041.8 278.0 1043.4 277.7M1017.5 278.5L1043.3 287.1M872.0 385.0C871.7 392.5 870.5 415.0 870.5 430.0C870.5 445.0 870.7 460.0 872.0 475.0C873.2 490.0 877.0 512.5 878.0 520.0M821.0 460.0C822.5 463.7 827.2 475.0 830.0 482.5C832.7 490.0 836.2 501.2 837.5 505.0M1014.2 336.5C1014.7 342.1 1015.7 360.7 1017.5 370.0C1019.3 379.3 1023.7 388.7 1025.0 392.5M980.0 430.0C982.5 436.2 990.0 456.2 995.0 467.5C1000.0 478.7 1006.2 488.7 1010.0 497.5C1013.7 506.2 1016.2 516.2 1017.5 520.0M809.0 490.0C810.5 495.0 815.5 510.0 818.0 520.0C820.5 530.0 823.0 545.0 824.0 550.0M928.8 272.4C922.0 280.7 897.0 302.6 887.9 322.3C878.8 342.0 875.8 367.7 874.3 390.4C872.8 413.1 875.8 437.3 878.8 458.5C881.9 479.7 890.2 507.7 892.4 517.5M956.0 322.3C951.5 333.7 934.1 363.9 928.8 390.4C923.5 416.9 925.0 466.1 924.2 481.2M974.2 367.7C975.7 379.1 978.7 416.9 983.2 435.8C987.8 454.7 998.4 473.6 1001.4 481.2M1046.8 322.3C1052.9 330.6 1071.8 354.8 1083.1 372.2C1094.5 389.6 1105.8 408.6 1114.9 426.7C1124.0 444.9 1133.8 472.1 1137.6 481.2M1114.9 290.5C1122.5 298.1 1149.0 319.3 1160.3 335.9C1171.7 352.6 1177.0 366.2 1183.0 390.4C1189.1 414.6 1194.4 466.1 1196.6 481.2M978.7 267.8C986.3 273.1 1010.5 288.3 1024.1 299.6C1037.7 311.0 1054.4 329.9 1060.4 335.9M1037.0 251.2C1045.0 256.0 1072.0 270.2 1085.0 280.0C1098.0 289.8 1106.2 300.0 1115.0 310.0C1123.7 320.0 1131.2 331.2 1137.5 340.0C1143.7 348.7 1150.0 358.7 1152.5 362.5M1097.0 256.0L1118.0 268.0M1121.0 292.0C1126.2 297.5 1144.7 314.5 1152.5 325.0C1160.2 335.5 1163.7 339.4 1167.5 355.0C1171.3 370.6 1174.1 407.9 1175.4 418.5M1039.2 374.1L1049.8 418.4M812.0 475.0C813.0 482.5 816.0 507.5 818.0 520.0C820.0 532.5 823.0 545.0 824.0 550.0M1151.0 599.5C1151.7 603.7 1154.4 617.7 1155.5 625.0C1156.6 632.3 1157.0 640.4 1157.3 643.5M1205.0 430.0C1206.5 432.5 1211.5 441.2 1214.0 445.0C1216.5 448.7 1219.0 451.2 1220.0 452.5M877.5 745.0C881.7 749.2 896.3 762.9 902.5 770.0C908.7 777.1 912.9 784.9 915.0 787.9M1159.0 740.0L1182.0 772.9M1036.0 770.0L1046.8 788.0M1118.9 788.3L1138.0 732.5M1162.0 746.5C1164.6 750.9 1172.3 765.6 1177.5 772.8C1182.7 780.1 1187.3 785.0 1193.0 789.9C1198.7 794.8 1208.5 800.2 1211.6 802.3M1097.4 931.7C1103.0 926.7 1117.6 910.4 1131.0 901.5C1144.3 892.6 1160.7 887.0 1177.5 878.2C1194.3 869.5 1222.7 853.7 1231.7 848.8M805.0 815.0C806.2 822.5 809.9 844.4 812.5 860.0C815.1 875.6 819.2 900.4 820.6 908.5M739.0 785.0L722.5 791.0M1025.0 952.5L1074.5 970.5M796.9 966.1L830.0 949.5M875.0 987.0L882.5 981.0M905.0 945.0L914.0 933.0M968.0 840.0C970.0 845.0 980.5 862.5 980.0 870.0C979.5 877.5 967.5 882.5 965.0 885.0M866.0 800.0C867.5 805.0 871.5 818.7 875.0 830.0C878.5 841.2 885.0 861.2 887.0 867.5M752.0 851.0C753.0 857.5 756.5 878.5 758.0 890.0C759.5 901.5 760.5 915.0 761.0 920.0M705.0 945.0C706.2 955.0 710.0 990.0 712.5 1005.0C715.0 1020.0 717.5 1022.5 720.0 1035.0C722.5 1047.5 726.2 1072.5 727.5 1080.0M732.0 1065.0L735.2 1128.5M757.5 1072.5C758.7 1070.0 760.7 1057.5 765.0 1057.5C769.2 1057.5 780.0 1070.0 783.0 1072.5M1034.5 1179.0L1051.0 1180.5M769.0 1122.0C769.5 1125.0 770.5 1132.0 772.0 1140.0C773.5 1148.0 777.0 1165.0 778.0 1170.0M970.0 1185.0L973.3 1218.5M689.5 1135.0C690.2 1140.0 692.7 1155.0 694.0 1165.0C695.2 1175.0 696.5 1190.0 697.0 1195.0M722.8 1116.7C724.8 1122.2 731.8 1139.4 734.5 1150.0C737.2 1160.6 739.7 1171.2 739.0 1180.0C738.2 1188.7 731.5 1198.7 730.0 1202.5M682.0 1217.5C680.7 1222.5 677.0 1236.2 674.5 1247.5C672.0 1258.7 669.3 1268.2 667.0 1285.0C664.7 1301.8 661.7 1337.9 660.7 1348.5M577.0 1165.0L569.5 1210.0M644.6 1116.5C644.3 1124.6 643.5 1151.9 643.0 1165.0C642.5 1178.1 641.7 1190.0 641.5 1195.0M1093.2 925.2C1098.0 922.5 1113.1 913.4 1122.0 909.0C1130.9 904.6 1142.7 900.4 1146.8 898.7M1047.3 906.8L1071.6 927.0M1046.9 955.9L1073.4 970.2M908.0 1202.0L954.3 1147.3"/>
<path fill="none" stroke="#ac7b53" stroke-width="2.5" stroke-opacity="0.75" stroke-linecap="round" stroke-linejoin="round" d="M866.1 336.9C862.6 343.7 850.0 365.7 845.0 377.5C840.0 389.3 837.7 396.2 836.0 407.5C834.2 418.7 834.7 438.7 834.5 445.0M1064.0 274.0C1071.2 276.5 1094.0 281.5 1107.5 289.0C1121.0 296.5 1135.0 308.0 1145.0 319.0C1155.0 330.0 1161.1 338.4 1167.5 355.0C1173.9 371.6 1180.7 407.8 1183.3 418.4M792.0 937.5C791.7 939.5 789.0 946.2 790.5 949.5C792.0 952.7 796.5 956.5 801.0 957.0C805.5 957.5 813.7 955.0 817.5 952.5C821.2 950.0 823.5 945.5 823.5 942.0C823.5 938.5 818.5 933.2 817.5 931.5"/>
<path fill="none" stroke="#ac7b53" stroke-width="2" stroke-opacity="0.45" stroke-linecap="round" stroke-linejoin="round" d="M884.6 337.2C880.5 342.7 865.8 358.3 860.0 370.0C854.1 381.7 851.5 396.2 849.5 407.5C847.5 418.7 846.5 428.7 848.0 437.5C849.5 446.2 856.7 456.2 858.5 460.0M977.0 380.5C978.7 386.2 984.5 404.2 987.5 415.0C990.5 425.7 992.5 435.0 995.0 445.0C997.5 455.0 1001.2 470.0 1002.5 475.0M905.0 415.0C906.2 420.0 910.0 435.0 912.5 445.0C915.0 455.0 916.7 466.2 920.0 475.0C923.2 483.7 930.0 493.7 932.0 497.5M890.0 355.0C888.7 361.2 883.5 380.0 882.5 392.5C881.5 405.0 882.2 418.7 884.0 430.0C885.7 441.2 891.5 455.0 893.0 460.0M1144.2 411.6C1145.8 418.4 1150.9 440.7 1154.0 452.5C1157.1 464.3 1161.5 477.5 1163.0 482.5M1167.3 411.5C1167.6 417.1 1169.2 432.9 1169.0 445.0C1168.8 457.1 1166.5 477.5 1166.0 484.0M730.0 773.0C727.5 777.5 718.7 790.5 715.0 800.0C711.2 809.5 709.2 817.5 707.5 830.0C705.7 842.5 705.3 861.9 704.5 875.0C703.7 888.1 703.1 902.9 702.8 908.5M778.0 744.5C780.0 745.5 786.7 750.5 790.0 750.5C793.2 750.5 796.2 745.5 797.5 744.5M752.5 852.5L757.3 908.5M853.0 807.5C855.0 813.7 862.2 831.2 865.0 845.0C867.7 858.7 868.7 882.5 869.5 890.0M832.0 740.0L883.5 733.6M736.4 718.4C739.0 718.0 747.8 715.2 752.0 716.0C756.2 716.8 760.0 722.0 761.6 723.2M708.8 773.6L723.2 755.6M722.0 792.8L740.0 784.4M728.0 773.6C726.0 776.0 719.4 781.6 716.0 788.0C712.6 794.4 709.0 808.0 707.6 812.0M752.0 797.6C750.0 801.0 743.4 809.6 740.0 818.0C736.6 826.4 733.0 843.0 731.6 848.0M804.5 817.5C805.5 823.7 808.2 841.2 810.5 855.0C812.7 868.7 816.7 892.5 818.0 900.0M867.5 802.5C870.0 808.7 878.7 827.5 882.5 840.0C886.2 852.5 888.7 871.2 890.0 877.5M887.0 822.0C889.5 827.5 897.7 845.7 902.0 855.0C906.2 864.2 910.7 873.7 912.5 877.5M732.5 785.0C730.0 788.7 721.2 798.7 717.5 807.5C713.7 816.2 712.0 826.2 710.0 837.5C708.0 848.7 706.7 861.2 705.5 875.0C704.2 888.7 703.0 912.5 702.5 920.0M785.0 782.0C784.5 787.5 782.0 803.2 782.0 815.0C782.0 826.7 783.0 841.2 785.0 852.5C787.0 863.7 791.0 875.0 794.0 882.5C797.0 890.0 801.5 895.0 803.0 897.5M804.5 780.5C805.2 786.2 807.2 801.7 809.0 815.0C810.7 828.2 813.5 847.5 815.0 860.0C816.5 872.5 817.5 885.0 818.0 890.0M821.0 764.0C823.7 767.5 832.7 777.0 837.5 785.0C842.2 793.0 845.7 802.0 849.5 812.0C853.2 822.0 857.7 832.0 860.0 845.0C862.2 858.0 862.5 882.5 863.0 890.0M888.5 792.5C890.7 797.5 897.7 811.2 902.0 822.5C906.2 833.7 912.0 853.7 914.0 860.0M740.0 879.5C740.5 885.0 742.5 897.7 743.0 912.5C743.5 927.3 743.0 959.2 743.0 968.5M724.3 896.5C724.8 904.6 725.7 931.9 727.5 945.0C729.3 958.1 733.7 970.0 735.0 975.0M777.0 898.2C780.0 900.0 787.5 905.4 795.0 909.0C802.5 912.6 817.5 917.7 822.0 919.5M855.0 1020.0L872.7 1034.2M1001.1 987.1C1004.7 992.6 1015.2 1009.5 1022.5 1020.0C1029.8 1030.5 1038.3 1042.1 1045.0 1050.0C1051.7 1057.9 1059.6 1064.6 1062.5 1067.5M1022.5 1167.0C1026.2 1167.5 1038.2 1168.3 1045.0 1170.0C1051.8 1171.7 1060.2 1176.1 1063.2 1177.3M757.5 1047.5C760.4 1050.4 769.6 1059.6 775.0 1065.0C780.4 1070.4 787.5 1077.5 790.0 1080.0M1047.8 1059.3C1050.6 1062.7 1059.5 1073.5 1064.4 1080.0C1069.3 1086.4 1074.9 1095.0 1077.0 1098.0M946.0 1220.0C946.3 1226.7 945.7 1248.3 948.0 1260.0C950.3 1271.7 953.0 1280.0 960.0 1290.0C967.0 1300.0 980.0 1311.7 990.0 1320.0C1000.0 1328.3 1015.0 1336.7 1020.0 1340.0M1146.0 1350.0C1147.7 1356.7 1154.3 1380.7 1156.0 1390.0C1157.7 1399.3 1156.0 1403.3 1156.0 1406.0M1020.0 1360.0C1018.7 1365.0 1014.0 1382.3 1012.0 1390.0C1010.0 1397.7 1008.7 1403.3 1008.0 1406.0"/>
<path fill="none" stroke="#ac7b53" stroke-width="2.5" stroke-opacity="0.65" stroke-linecap="round" stroke-linejoin="round" d="M935.0 422.5C937.5 428.7 943.7 450.0 950.0 460.0C956.2 470.0 965.0 477.5 972.5 482.5C980.0 487.5 988.7 489.2 995.0 490.0C1001.2 490.7 1007.5 487.5 1010.0 487.0M903.4 776.9C906.2 782.4 915.5 799.5 920.0 810.0C924.5 820.5 927.5 830.0 930.5 840.0C933.5 850.0 936.7 865.0 938.0 870.0M798.5 762.5C800.0 766.2 804.7 776.2 807.5 785.0C810.2 793.7 812.5 805.0 815.0 815.0C817.5 825.0 820.5 835.0 822.5 845.0C824.5 855.0 825.7 865.0 827.0 875.0C828.2 885.0 829.5 900.0 830.0 905.0M654.0 997.5C650.0 996.0 637.5 989.2 630.0 988.5C622.5 987.7 612.7 990.2 609.0 993.0C605.2 995.7 606.5 1002.0 607.5 1005.0C608.5 1008.0 611.2 1011.0 615.0 1011.0C618.7 1011.0 623.5 1007.2 630.0 1005.0C636.5 1002.7 650.0 998.7 654.0 997.5M1024.0 1161.0C1027.5 1161.2 1038.4 1161.3 1045.0 1162.5C1051.6 1163.7 1060.3 1167.1 1063.4 1168.0M793.3 1116.5C792.8 1122.1 792.8 1140.7 790.0 1150.0C787.2 1159.3 782.0 1165.0 776.5 1172.5C771.0 1180.0 763.7 1187.5 757.0 1195.0C750.2 1202.5 741.0 1210.5 736.0 1217.5C731.0 1224.5 728.5 1233.7 727.0 1237.0M884.0 1274.0C878.3 1281.7 860.7 1305.7 850.0 1320.0C839.3 1334.3 827.3 1348.3 820.0 1360.0C812.7 1371.7 808.3 1385.0 806.0 1390.0M970.0 1190.0C970.0 1196.7 968.3 1218.3 970.0 1230.0C971.7 1241.7 975.0 1251.7 980.0 1260.0C985.0 1268.3 990.0 1273.3 1000.0 1280.0C1010.0 1286.7 1028.3 1291.7 1040.0 1300.0C1051.7 1308.3 1061.7 1321.7 1070.0 1330.0C1078.3 1338.3 1083.3 1343.3 1090.0 1350.0C1096.7 1356.7 1106.7 1366.7 1110.0 1370.0M793.0 1405.5L804.3 1392.3"/>
<path fill="none" stroke="#ac7b53" stroke-width="2.5" stroke-opacity="0.55" stroke-linecap="round" stroke-linejoin="round" d="M819.8 335.9C816.8 345.0 805.4 366.2 801.6 390.4C797.9 414.6 794.1 450.9 797.1 481.2C800.1 511.5 816.0 556.9 819.8 572.0M847.0 308.7C842.5 318.5 825.9 346.5 819.8 367.7C813.8 388.9 810.7 409.3 810.7 435.8C810.7 462.3 815.3 500.9 819.8 526.6C824.3 552.3 834.9 579.6 838.0 590.2M901.5 276.9C895.5 286.7 873.5 313.2 865.2 335.9C856.9 358.6 853.1 388.9 851.6 413.1C850.1 437.3 851.6 458.5 856.1 481.2C860.7 503.9 875.0 538.0 878.8 549.3M946.9 299.6C940.9 308.7 918.9 331.4 910.6 354.1C902.3 376.8 898.5 410.8 897.0 435.8C895.5 460.8 900.8 492.6 901.5 503.9M956.0 345.0C954.5 356.4 946.9 391.9 946.9 413.1C946.9 434.3 950.7 457.0 956.0 472.1C961.3 487.3 974.9 498.6 978.7 503.9M1103.0 325.0C1107.5 330.0 1123.0 345.0 1130.0 355.0C1137.0 365.0 1140.3 374.5 1145.0 385.0C1149.7 395.5 1156.1 412.7 1158.3 418.2M1155.8 723.2C1157.3 726.3 1158.9 735.4 1165.1 741.8C1171.3 748.3 1184.2 756.6 1193.0 762.0C1201.8 767.4 1213.7 772.3 1217.8 774.4M1219.3 762.0C1220.4 765.9 1224.3 776.2 1225.5 785.2C1226.8 794.3 1227.9 804.6 1227.1 816.2C1226.3 827.9 1224.0 842.1 1220.9 855.0C1217.8 867.9 1213.4 880.3 1208.5 893.7C1203.6 907.2 1194.5 928.7 1191.7 935.7M722.5 755.0C718.7 757.5 707.5 762.5 700.0 770.0C692.5 777.5 683.7 790.0 677.5 800.0C671.2 810.0 666.2 818.7 662.5 830.0C658.7 841.2 656.8 854.4 655.0 867.5C653.2 880.6 652.3 901.7 651.7 908.5M668.0 756.8C670.0 755.2 676.4 749.6 680.0 747.2C683.6 744.8 688.0 743.2 689.6 742.4M1022.0 912.0L1070.0 927.0M700.0 896.5C700.8 902.1 701.7 919.4 705.0 930.0C708.3 940.6 715.0 950.0 720.0 960.0C725.0 970.0 730.0 980.0 735.0 990.0C740.0 1000.0 745.0 1011.2 750.0 1020.0C755.0 1028.7 762.5 1038.7 765.0 1042.5M868.0 1105.5C871.2 1104.7 880.7 1103.0 887.5 1101.0C894.2 1099.0 905.0 1094.7 908.5 1093.5M956.0 1210.0C954.0 1215.0 944.7 1230.0 944.0 1240.0C943.3 1250.0 947.7 1261.7 952.0 1270.0C956.3 1278.3 962.0 1283.3 970.0 1290.0C978.0 1296.7 991.7 1301.7 1000.0 1310.0C1008.3 1318.3 1015.0 1330.0 1020.0 1340.0C1025.0 1350.0 1029.0 1361.7 1030.0 1370.0C1031.0 1378.3 1027.7 1384.0 1026.0 1390.0C1024.3 1396.0 1021.0 1403.3 1020.0 1406.0M669.2 1286.6C668.1 1292.1 663.9 1309.4 662.5 1320.0C661.1 1330.6 660.2 1342.5 661.0 1350.0C661.7 1357.5 666.0 1362.5 667.0 1365.0"/>
<path fill="none" stroke="#ac7b53" stroke-width="2.5" stroke-opacity="0.5" stroke-linecap="round" stroke-linejoin="round" d="M1092.2 317.8C1099.8 326.1 1125.5 348.0 1137.6 367.7C1149.7 387.4 1157.3 413.1 1164.9 435.8C1172.4 458.5 1180.0 492.6 1183.0 503.9M1146.7 308.7C1152.7 318.5 1173.9 346.5 1183.0 367.7C1192.1 388.9 1197.4 410.8 1201.2 435.8C1205.0 460.8 1205.0 503.9 1205.7 517.5M994.4 411.5C995.8 419.6 1000.4 444.4 1002.5 460.0C1004.6 475.6 1006.0 486.2 1007.0 505.0C1008.0 523.7 1008.2 561.2 1008.5 572.5M988.0 617.0L1007.5 626.0M734.5 711.5C736.2 711.2 740.2 709.5 745.0 710.0C749.7 710.5 760.0 713.7 763.0 714.5M734.0 716.0C735.4 715.0 738.4 710.6 742.4 710.0C746.4 709.4 754.4 710.6 758.0 712.4C761.6 714.2 763.0 719.4 764.0 720.8M984.3 776.5C984.6 782.1 986.7 799.4 986.0 810.0C985.3 820.6 981.0 835.0 980.0 840.0M1035.2 777.0C1038.5 782.5 1050.4 803.2 1055.0 810.0C1059.5 816.8 1061.2 816.2 1062.5 817.5M856.0 1020.0C858.7 1022.0 866.5 1032.0 872.5 1032.0C878.5 1032.0 887.0 1023.7 892.0 1020.0C897.0 1016.2 900.7 1011.2 902.5 1009.5M890.5 1038.0L908.5 1032.0M742.0 1225.0C747.0 1226.5 764.5 1231.5 772.0 1234.0C779.5 1236.5 784.5 1239.0 787.0 1240.0M741.4 1116.5C742.0 1120.1 742.4 1132.9 745.0 1138.0C747.6 1143.1 755.0 1145.5 757.0 1147.0"/>
<path fill="none" stroke="#ac7b53" stroke-width="2" stroke-opacity="0.35" stroke-linecap="round" stroke-linejoin="round" d="M910.6 308.7C907.6 299.6 890.2 264.8 892.4 254.2C894.7 243.6 918.9 246.6 924.2 245.1M1010.5 254.2C1020.3 256.5 1052.1 261.8 1069.5 267.8C1086.9 273.9 1107.3 286.7 1114.9 290.5M1036.5 233.4C1044.6 233.7 1071.4 232.5 1085.0 235.0C1098.6 237.5 1112.5 246.2 1118.0 248.5M1174.4 793.0C1177.5 795.6 1182.1 803.6 1193.0 808.5C1203.8 813.4 1231.7 820.1 1239.5 822.4M903.2 1008.5L905.0 987.0M1104.0 932.4L1127.4 927.0"/>
<path fill="none" stroke="#ac7b53" stroke-width="4.5" stroke-opacity="0.9" stroke-linecap="round" stroke-linejoin="round" d="M858.5 508.0C861.2 506.5 867.2 501.2 875.0 499.0C882.7 496.7 893.0 494.5 905.0 494.5C917.0 494.5 940.0 498.2 947.0 499.0M1036.7 470.2C1042.2 468.2 1057.9 461.1 1070.0 458.5C1082.1 455.9 1102.5 455.4 1109.0 454.7M878.0 909.0C880.0 906.0 884.2 895.5 890.0 891.0C895.7 886.5 905.0 884.0 912.5 882.0C920.0 880.0 929.0 880.0 935.0 879.0C941.0 878.0 946.2 876.5 948.5 876.0M750.0 955.5C752.5 952.5 758.7 942.0 765.0 937.5C771.2 933.0 780.0 930.5 787.5 928.5C795.0 926.5 802.7 925.5 810.0 925.5C817.2 925.5 827.5 928.0 831.0 928.5"/>
<path fill="none" stroke="#ac7b53" stroke-width="4" stroke-opacity="0.9" stroke-linecap="round" stroke-linejoin="round" d="M1017.5 487.0C1020.0 484.5 1028.2 475.2 1032.5 472.0C1036.8 468.8 1041.5 468.4 1043.2 467.7M760.0 746.0C756.2 747.5 745.0 749.7 737.5 755.0C730.0 760.2 721.7 768.7 715.0 777.5C708.2 786.2 702.0 796.2 697.0 807.5C692.0 818.7 687.7 833.7 685.0 845.0C682.2 856.2 681.5 864.4 680.5 875.0C679.5 885.6 679.1 902.9 678.8 908.5M730.0 902.0C737.5 900.5 760.0 896.0 775.0 893.0C790.0 890.0 810.0 886.2 820.0 884.0C830.0 881.7 832.5 880.2 835.0 879.5M862.0 872.0L883.2 863.2M930.0 777.1C932.1 780.1 938.7 787.0 942.5 795.0C946.3 803.0 950.2 815.0 953.0 825.0C955.7 835.0 957.5 845.0 959.0 855.0C960.5 865.0 961.0 875.0 962.0 885.0C963.0 895.0 963.7 905.0 965.0 915.0C966.2 925.0 968.2 935.0 969.5 945.0C970.7 955.0 971.7 964.4 972.5 975.0C973.3 985.6 973.9 1002.9 974.2 1008.5M935.0 858.0C935.5 862.5 937.0 877.5 938.0 885.0C939.0 892.5 940.5 900.0 941.0 903.0M627.5 896.5C626.9 900.9 624.1 914.4 624.0 922.5C623.9 930.6 625.2 936.2 627.0 945.0C628.7 953.7 632.7 962.5 634.5 975.0C636.2 987.5 636.2 1007.5 637.5 1020.0C638.7 1032.5 641.2 1037.5 642.0 1050.0C642.7 1062.5 643.4 1081.9 642.0 1095.0C640.6 1108.1 635.0 1122.8 633.7 1128.4"/>
<path fill="none" stroke="#ac7b53" stroke-width="3.5" stroke-opacity="0.85" stroke-linecap="round" stroke-linejoin="round" d="M1011.4 411.9C1013.6 416.2 1019.8 430.3 1025.0 437.5C1030.2 444.7 1039.6 452.1 1042.5 455.0M877.2 715.4C882.7 719.5 899.2 727.9 910.0 740.0C920.8 752.1 936.6 779.9 941.9 787.9M1158.0 696.6C1159.5 702.3 1162.1 721.4 1166.6 731.0C1171.2 740.6 1175.7 745.7 1185.2 754.2C1194.8 762.8 1209.8 773.1 1224.0 782.1C1238.2 791.2 1255.0 800.2 1270.5 808.5C1286.0 816.8 1301.5 824.0 1317.0 831.7C1332.5 839.5 1347.4 847.5 1363.5 855.0C1379.5 862.5 1404.9 872.9 1413.2 876.5M1261.2 875.1C1257.6 878.2 1248.3 886.8 1239.5 893.7C1230.7 900.7 1216.7 910.1 1208.5 917.0C1200.3 923.9 1193.5 932.0 1190.5 935.0M820.0 747.5C821.2 744.2 822.5 731.7 827.5 728.0C832.5 724.2 840.7 724.1 850.0 725.0C859.3 725.9 877.8 732.0 883.4 733.3M600.0 1020.0C598.7 1025.0 594.5 1040.0 592.5 1050.0C590.5 1060.0 589.0 1066.9 588.0 1080.0C587.0 1093.1 586.7 1120.4 586.4 1128.5M652.4 896.5C652.7 904.6 652.7 929.4 654.0 945.0C655.3 960.6 659.0 975.0 660.0 990.0C661.0 1005.0 661.0 1020.0 660.0 1035.0C659.0 1050.0 654.7 1064.4 654.0 1080.0C653.3 1095.6 655.3 1120.4 655.6 1128.5M747.2 896.5C746.7 904.6 743.5 929.4 744.0 945.0C744.5 960.6 747.0 977.5 750.0 990.0C753.0 1002.5 759.0 1011.2 762.0 1020.0C765.0 1028.7 766.2 1035.0 768.0 1042.5C769.7 1050.0 771.7 1061.2 772.5 1065.0M777.0 1032.0C780.0 1031.2 788.2 1025.7 795.0 1027.5C801.7 1029.2 810.0 1036.2 817.5 1042.5C825.0 1048.7 830.8 1057.1 840.0 1065.0C849.2 1072.8 867.3 1085.5 872.8 1089.6M780.0 1035.0C782.5 1038.7 790.0 1051.2 795.0 1057.5C800.0 1063.7 805.0 1066.2 810.0 1072.5C815.0 1078.7 821.1 1085.7 825.0 1095.0C828.9 1104.3 832.0 1122.8 833.3 1128.4M779.5 1027.5C784.5 1028.5 801.5 1029.7 809.5 1033.5C817.5 1037.2 820.7 1043.5 827.5 1050.0C834.2 1056.5 842.5 1065.5 850.0 1072.5C857.5 1079.5 865.5 1087.7 872.5 1092.0C879.5 1096.2 885.7 1098.0 892.0 1098.0C898.2 1098.0 903.2 1097.0 910.0 1092.0C916.7 1087.0 925.0 1077.0 932.5 1068.0C940.0 1059.0 948.7 1048.0 955.0 1038.0C961.2 1028.0 966.9 1016.6 970.0 1008.0C973.1 999.4 973.0 990.1 973.6 986.5M778.0 1032.0C780.5 1036.2 787.2 1049.5 793.0 1057.5C798.7 1065.5 806.7 1071.2 812.5 1080.0C818.2 1088.7 823.7 1100.0 827.5 1110.0C831.2 1120.0 833.5 1130.0 835.0 1140.0C836.5 1150.0 836.7 1160.5 836.5 1170.0C836.2 1179.5 836.7 1190.7 833.5 1197.0C830.2 1203.2 822.2 1204.2 817.0 1207.5C811.8 1210.8 804.5 1215.3 802.0 1216.9M969.7 986.5C970.5 994.6 974.4 1024.4 974.5 1035.0C974.6 1045.6 973.2 1043.7 970.0 1050.0C966.7 1056.2 958.7 1065.0 955.0 1072.5C951.2 1080.0 948.7 1091.2 947.5 1095.0M973.4 986.7C974.8 991.0 978.8 1004.4 982.0 1012.5C985.2 1020.6 988.2 1027.5 992.5 1035.0C996.7 1042.5 1005.0 1050.0 1007.5 1057.5C1010.0 1065.0 1008.7 1068.7 1007.5 1080.0C1006.2 1091.2 1002.2 1110.0 1000.0 1125.0C997.7 1140.0 995.3 1154.4 994.0 1170.0C992.7 1185.6 992.7 1210.4 992.4 1218.5M992.5 1057.5C990.7 1062.5 985.7 1077.5 982.0 1087.5C978.2 1097.5 974.5 1108.7 970.0 1117.5C965.5 1126.2 961.2 1132.5 955.0 1140.0C948.7 1147.5 940.0 1155.0 932.5 1162.5C925.0 1170.0 915.0 1178.7 910.0 1185.0C905.0 1191.2 903.7 1197.5 902.5 1200.0M997.0 1147.5C992.5 1151.2 978.2 1162.5 970.0 1170.0C961.7 1177.5 955.4 1184.6 947.5 1192.5C939.6 1200.4 926.7 1213.3 922.5 1217.5M588.8 1116.5C589.1 1122.1 591.0 1139.4 590.5 1150.0C590.0 1160.6 588.7 1168.7 586.0 1180.0C583.2 1191.2 578.5 1205.0 574.0 1217.5C569.5 1230.0 564.0 1243.7 559.0 1255.0C554.0 1266.2 549.7 1272.5 544.0 1285.0C538.2 1297.5 528.0 1320.5 524.5 1330.0C521.0 1339.5 523.2 1340.0 523.0 1342.0M635.0 1116.6C633.3 1122.2 627.2 1140.7 625.0 1150.0C622.8 1159.3 625.0 1163.7 622.0 1172.5C619.0 1181.2 613.2 1192.5 607.0 1202.5C600.7 1212.5 590.2 1223.7 584.5 1232.5C578.7 1241.2 575.2 1246.2 572.5 1255.0C569.7 1263.7 568.7 1275.0 568.0 1285.0C567.2 1295.0 567.0 1307.5 568.0 1315.0C569.0 1322.5 571.8 1324.5 574.0 1330.0C576.2 1335.5 580.1 1345.2 581.3 1348.2M666.3 1116.6C667.4 1122.1 671.4 1139.4 673.0 1150.0C674.6 1160.6 675.7 1170.0 676.0 1180.0C676.2 1190.0 675.2 1200.5 674.5 1210.0C673.7 1219.5 672.0 1232.5 671.5 1237.0M658.0 1210.0C655.7 1213.7 649.2 1225.0 644.5 1232.5C639.7 1240.0 633.5 1247.5 629.5 1255.0C625.5 1262.5 622.2 1268.7 620.5 1277.5C618.7 1286.2 618.5 1298.7 619.0 1307.5C619.5 1316.2 621.2 1324.2 623.5 1330.0C625.7 1335.7 631.0 1340.0 632.5 1342.0M708.3 1116.6C709.4 1122.1 713.1 1139.4 715.0 1150.0C716.9 1160.6 719.0 1170.0 719.5 1180.0C720.0 1190.0 719.2 1201.2 718.0 1210.0C716.7 1218.7 714.2 1225.0 712.0 1232.5C709.7 1240.0 707.0 1247.5 704.5 1255.0C702.0 1262.5 699.2 1268.7 697.0 1277.5C694.7 1286.2 691.7 1295.7 691.0 1307.5C690.3 1319.3 692.4 1341.7 692.6 1348.5M804.8 1215.4C799.3 1219.5 782.5 1232.9 772.0 1240.0C761.5 1247.1 750.7 1251.7 742.0 1258.0C733.2 1264.2 727.5 1271.0 719.5 1277.5C711.5 1284.0 698.5 1292.0 694.0 1297.0C689.5 1302.0 692.7 1305.7 692.5 1307.5M1138.2 966.6C1141.5 964.2 1151.1 957.9 1158.0 952.2C1164.9 946.5 1173.6 937.8 1179.6 932.4C1185.6 927.0 1191.6 921.9 1194.0 919.8M1179.6 945.0C1183.5 941.7 1193.5 933.1 1203.0 925.2C1212.4 917.3 1230.7 902.3 1236.3 897.8M1002.8 1147.9C995.7 1153.2 973.8 1168.0 960.0 1180.0C946.2 1192.0 931.7 1206.3 920.0 1220.0C908.3 1233.7 900.0 1247.7 890.0 1262.0C880.0 1276.3 870.0 1291.3 860.0 1306.0C850.0 1320.7 840.4 1335.5 830.0 1350.0C819.6 1364.5 803.2 1385.7 797.9 1392.8M836.2 1146.5C835.8 1153.8 836.0 1180.8 834.0 1190.0C832.0 1199.2 830.2 1197.0 824.0 1202.0C817.8 1207.0 801.6 1217.0 797.1 1219.9M1020.5 1146.5C1019.7 1152.1 1018.1 1169.4 1016.0 1180.0C1013.9 1190.6 1008.7 1201.7 1008.0 1210.0C1007.3 1218.3 1010.0 1224.0 1012.0 1230.0C1014.0 1236.0 1013.7 1240.7 1020.0 1246.0C1026.3 1251.3 1040.0 1257.0 1050.0 1262.0C1060.0 1267.0 1072.3 1271.3 1080.0 1276.0C1087.7 1280.7 1092.7 1284.3 1096.0 1290.0C1099.3 1295.7 1098.7 1301.7 1100.0 1310.0C1101.3 1318.3 1103.0 1331.7 1104.0 1340.0C1105.0 1348.3 1105.7 1356.7 1106.0 1360.0M1110.0 1230.0C1109.7 1240.0 1107.7 1270.0 1108.0 1290.0C1108.3 1310.0 1111.0 1330.7 1112.0 1350.0C1113.0 1369.3 1113.7 1396.7 1114.0 1406.0M1116.0 1262.0C1118.3 1268.3 1126.0 1287.0 1130.0 1300.0C1134.0 1313.0 1137.7 1326.7 1140.0 1340.0C1142.3 1353.3 1144.0 1369.0 1144.0 1380.0C1144.0 1391.0 1140.7 1401.7 1140.0 1406.0M544.0 1286.8C542.0 1291.1 535.5 1305.0 532.0 1312.5C528.5 1320.0 524.5 1326.2 523.0 1332.0C521.5 1337.7 521.0 1343.0 523.0 1347.0C525.0 1351.0 530.5 1353.7 535.0 1356.0C539.5 1358.2 547.5 1359.7 550.0 1360.5M547.0 1359.0C545.7 1362.5 542.0 1374.0 539.5 1380.0C537.0 1386.0 533.7 1390.7 532.0 1395.0C530.2 1399.2 529.5 1403.7 529.0 1405.5M568.2 1286.5C567.9 1292.1 565.0 1311.9 566.5 1320.0C568.0 1328.1 573.5 1329.2 577.0 1335.0C580.5 1340.7 585.0 1348.0 587.5 1354.5C590.0 1361.0 591.7 1367.7 592.0 1374.0C592.2 1380.2 590.7 1386.7 589.0 1392.0C587.2 1397.2 582.7 1403.2 581.5 1405.5M595.0 1296.0C594.5 1298.7 594.5 1306.0 592.0 1312.5C589.5 1319.0 584.2 1328.7 580.0 1335.0C575.7 1341.2 569.7 1343.7 566.5 1350.0C563.2 1356.2 561.2 1366.2 560.5 1372.5C559.7 1378.7 561.0 1383.7 562.0 1387.5C563.0 1391.2 565.7 1393.7 566.5 1395.0M595.0 1296.0C598.7 1299.0 611.5 1310.2 617.5 1314.0C623.5 1317.7 628.7 1317.7 631.0 1318.5M622.5 1286.5C621.9 1290.9 619.3 1304.4 619.0 1312.5C618.7 1320.6 618.5 1328.7 620.5 1335.0C622.5 1341.2 627.0 1345.0 631.0 1350.0C635.0 1355.0 640.5 1360.0 644.5 1365.0C648.5 1370.0 652.5 1375.0 655.0 1380.0C657.5 1385.0 659.0 1390.7 659.5 1395.0C660.0 1399.2 658.2 1403.7 658.0 1405.5M649.2 1286.5C648.9 1290.8 647.0 1304.4 647.5 1312.5C648.0 1320.6 649.2 1328.0 652.0 1335.0C654.7 1342.0 660.0 1348.7 664.0 1354.5C668.0 1360.2 673.0 1364.0 676.0 1369.5C679.0 1375.0 681.0 1381.5 682.0 1387.5C683.0 1393.5 682.0 1402.5 682.0 1405.5M692.8 1286.5C692.3 1292.1 689.3 1310.7 689.5 1320.0C689.7 1329.3 691.7 1335.7 694.0 1342.5C696.2 1349.2 700.7 1355.5 703.0 1360.5C705.2 1365.5 707.2 1368.0 707.5 1372.5C707.7 1377.0 706.5 1383.0 704.5 1387.5C702.5 1392.0 697.7 1396.5 695.5 1399.5C693.2 1402.5 691.7 1404.5 691.0 1405.5M692.5 1311.0C695.7 1309.0 705.7 1302.8 712.0 1299.0C718.2 1295.2 727.0 1290.0 730.0 1288.2M776.5 1405.5C779.5 1402.5 789.9 1392.7 794.5 1387.5C799.1 1382.3 802.4 1376.4 804.0 1374.2"/>
<path fill="none" stroke="#ac7b53" stroke-width="5" stroke-opacity="0.9" stroke-linecap="round" stroke-linejoin="round" d="M1178.0 544.0L1181.0 550.0M1158.5 576.2L1159.2 577.7"/>
<path fill="none" stroke="#ac7b53" stroke-width="4.5" stroke-opacity="0.85" stroke-linecap="round" stroke-linejoin="round" d="M1175.7 569.5L1176.5 571.7"/>
<path fill="none" stroke="#ac7b53" stroke-width="3" stroke-opacity="0.8" stroke-linecap="round" stroke-linejoin="round" d="M1215.4 411.9L1233.5 446.5M1018.0 617.0L1021.0 615.5M773.5 704.0C778.7 703.5 793.5 701.0 805.0 701.0C816.5 701.0 829.4 701.3 842.5 704.0C855.6 706.7 876.5 714.9 883.3 717.1M812.5 752.0C816.2 755.0 828.7 763.2 835.0 770.0C841.2 776.7 845.0 782.5 850.0 792.5C855.0 802.5 861.2 816.2 865.0 830.0C868.7 843.7 871.2 867.5 872.5 875.0M767.5 770.0C766.7 775.0 764.0 787.5 763.0 800.0C762.0 812.5 760.2 832.5 761.5 845.0C762.7 857.5 766.0 864.5 770.5 875.0C775.0 885.5 785.7 902.6 788.7 908.1M796.0 734.0L805.0 726.5M861.5 873.0C866.2 870.5 879.0 864.0 890.0 858.0C901.0 852.0 921.2 840.5 927.5 837.0M857.0 897.0C857.5 900.0 858.0 909.0 860.0 915.0C862.0 921.0 865.0 927.5 869.0 933.0C873.0 938.5 880.2 944.0 884.0 948.0C887.7 952.0 890.2 955.5 891.5 957.0M630.0 963.0C627.5 965.5 619.2 973.0 615.0 978.0C610.7 983.0 607.0 988.5 604.5 993.0C602.0 997.5 600.7 1003.0 600.0 1005.0M663.0 1005.0C660.0 1002.5 651.7 994.2 645.0 990.0C638.2 985.7 629.5 980.7 622.5 979.5C615.5 978.2 607.7 980.2 603.0 982.5C598.2 984.7 595.2 988.7 594.0 993.0C592.7 997.2 593.2 1004.0 595.5 1008.0C597.7 1012.0 603.5 1014.7 607.5 1017.0C611.5 1019.2 615.7 1021.5 619.5 1021.5C623.2 1021.5 625.7 1019.2 630.0 1017.0C634.2 1014.7 639.5 1010.0 645.0 1008.0C650.5 1006.0 660.0 1005.5 663.0 1005.0M666.0 1008.0C668.7 1004.5 677.2 992.0 682.5 987.0C687.7 982.0 693.7 978.5 697.5 978.0C701.2 977.5 704.2 980.7 705.0 984.0C705.7 987.2 701.5 992.7 702.0 997.5C702.5 1002.2 705.0 1008.2 708.0 1012.5C711.0 1016.7 719.2 1019.7 720.0 1023.0C720.7 1026.2 716.2 1030.5 712.5 1032.0C708.7 1033.5 702.5 1034.0 697.5 1032.0C692.5 1030.0 686.7 1023.5 682.5 1020.0C678.2 1016.5 673.7 1012.5 672.0 1011.0M663.0 1008.0C660.0 1010.0 650.0 1015.5 645.0 1020.0C640.0 1024.5 636.5 1028.7 633.0 1035.0C629.5 1041.2 626.0 1050.0 624.0 1057.5C622.0 1065.0 620.7 1074.2 621.0 1080.0C621.2 1085.7 624.7 1090.0 625.5 1092.0M669.0 1011.0C670.5 1013.2 674.5 1018.0 678.0 1024.5C681.5 1031.0 686.7 1042.0 690.0 1050.0C693.2 1058.0 696.2 1065.0 697.5 1072.5C698.7 1080.0 697.5 1091.2 697.5 1095.0M771.0 1057.5C772.5 1061.2 777.2 1072.5 780.0 1080.0C782.7 1087.5 785.4 1094.4 787.5 1102.5C789.6 1110.6 791.8 1124.1 792.7 1128.4M1046.5 971.5C1051.6 972.2 1067.4 975.5 1077.0 975.6C1086.6 975.7 1094.1 973.5 1104.0 972.0C1113.9 970.5 1131.0 967.5 1136.4 966.6M884.0 1276.0C886.7 1278.3 895.3 1287.7 900.0 1290.0C904.7 1292.3 908.3 1293.3 912.0 1290.0C915.7 1286.7 921.3 1275.3 922.0 1270.0C922.7 1264.7 919.0 1259.3 916.0 1258.0C913.0 1256.7 906.0 1261.3 904.0 1262.0M796.6 1383.0C803.9 1385.2 826.8 1392.2 840.0 1396.0C853.2 1399.8 870.0 1404.3 876.0 1406.0"/>
<path fill="none" stroke="#ac7b53" stroke-width="3" stroke-opacity="0.7" stroke-linecap="round" stroke-linejoin="round" d="M1066.9 641.7L1086.5 631.0M752.0 954.5L770.0 957.5M944.5 1113.0C942.5 1115.5 936.2 1124.5 932.5 1128.0C928.7 1131.5 923.7 1133.0 922.0 1134.0"/>
<path fill="none" stroke="#ac7b53" stroke-width="3" stroke-opacity="0.75" stroke-linecap="round" stroke-linejoin="round" d="M1147.0 605.0C1147.2 612.5 1146.7 635.0 1148.5 650.0C1150.2 665.0 1154.2 681.2 1157.5 695.0C1160.7 708.7 1163.9 723.0 1168.0 732.5C1172.1 742.0 1179.7 748.6 1182.1 751.8M752.0 746.0C753.6 746.1 759.0 745.6 761.6 746.6C764.2 747.6 766.6 751.1 767.6 752.0M796.6 890.4C800.9 889.3 815.7 885.6 822.5 883.5C829.3 881.3 835.0 878.5 837.5 877.5M770.0 773.0C769.0 777.5 765.2 790.5 764.0 800.0C762.7 809.5 762.0 820.0 762.5 830.0C763.0 840.0 764.5 851.2 767.0 860.0C769.5 868.7 773.2 876.2 777.5 882.5C781.7 888.7 787.5 892.5 792.5 897.5C797.5 902.5 805.0 910.0 807.5 912.5M787.5 963.0C790.0 963.2 797.5 965.7 802.5 964.5C807.5 963.2 812.2 958.2 817.5 955.5C822.7 952.7 831.2 949.2 834.0 948.0M658.3 1116.5C657.8 1122.1 655.3 1139.4 655.0 1150.0C654.7 1160.6 655.7 1171.2 656.5 1180.0C657.2 1188.7 661.5 1197.5 659.5 1202.5C657.5 1207.5 649.5 1208.2 644.5 1210.0C639.5 1211.7 634.2 1210.5 629.5 1213.0C624.7 1215.5 619.7 1219.2 616.0 1225.0C612.2 1230.7 609.2 1238.7 607.0 1247.5C604.7 1256.2 603.7 1268.7 602.5 1277.5C601.2 1286.2 600.3 1288.2 599.5 1300.0C598.7 1311.8 598.2 1340.4 597.9 1348.5M771.1 1116.6C772.5 1122.2 779.4 1139.4 779.5 1150.0C779.6 1160.6 775.7 1171.2 772.0 1180.0C768.2 1188.7 762.0 1196.2 757.0 1202.5C752.0 1208.7 747.0 1212.5 742.0 1217.5C737.0 1222.5 732.0 1228.7 727.0 1232.5C722.0 1236.2 714.5 1238.7 712.0 1240.0M595.0 1297.0C597.0 1298.2 602.5 1301.5 607.0 1304.5C611.5 1307.5 618.2 1312.7 622.0 1315.0C625.7 1317.2 628.2 1317.5 629.5 1318.0M596.5 1297.0C594.7 1300.0 589.7 1308.2 586.0 1315.0C582.2 1321.7 576.0 1333.7 574.0 1337.5M1024.0 1162.0C1030.0 1163.0 1049.0 1163.3 1060.0 1168.0C1071.0 1172.7 1082.3 1181.3 1090.0 1190.0C1097.7 1198.7 1103.0 1210.0 1106.0 1220.0C1109.0 1230.0 1109.0 1241.7 1108.0 1250.0C1107.0 1258.3 1104.7 1265.3 1100.0 1270.0C1095.3 1274.7 1083.3 1276.7 1080.0 1278.0M954.0 1406.0C958.3 1401.7 970.7 1389.3 980.0 1380.0C989.3 1370.7 1000.0 1358.3 1010.0 1350.0C1020.0 1341.7 1032.3 1334.3 1040.0 1330.0C1047.7 1325.7 1053.3 1325.0 1056.0 1324.0M922.0 1348.0C922.3 1351.7 921.7 1363.0 924.0 1370.0C926.3 1377.0 932.7 1384.0 936.0 1390.0C939.3 1396.0 942.7 1403.3 944.0 1406.0M599.3 1286.5C599.6 1292.1 600.7 1307.7 601.0 1320.0C601.3 1332.3 601.0 1353.7 601.0 1360.5M628.0 1341.0C624.5 1343.7 614.2 1351.5 607.0 1357.5C599.7 1363.5 591.2 1370.7 584.5 1377.0C577.7 1383.2 570.2 1390.2 566.5 1395.0C562.7 1399.7 562.7 1403.7 562.0 1405.5"/>
<path fill="none" stroke="#ac7b53" stroke-width="3" stroke-opacity="0.55" stroke-linecap="round" stroke-linejoin="round" d="M1018.0 680.0C1020.0 679.7 1023.5 680.0 1030.0 678.5C1036.5 677.0 1052.5 672.2 1057.0 671.0"/>
<path fill="none" stroke="#ac7b53" stroke-width="4" stroke-opacity="0.5" stroke-linecap="round" stroke-linejoin="round" d="M1027.0 680.0L1042.0 677.0"/>
<path fill="none" stroke="#ac7b53" stroke-width="3" stroke-opacity="0.6" stroke-linecap="round" stroke-linejoin="round" d="M995.5 609.5L1010.5 612.5"/>
<path fill="none" stroke="#ac7b53" stroke-width="4" stroke-opacity="0.85" stroke-linecap="round" stroke-linejoin="round" d="M1275.1 805.4C1276.4 808.0 1282.4 813.9 1282.9 820.9C1283.4 827.9 1280.3 840.3 1278.2 847.2C1276.2 854.2 1272.8 856.8 1270.5 862.7C1268.2 868.7 1265.3 879.5 1264.3 882.9M796.5 925.8C799.6 925.5 809.2 923.6 815.0 924.0C820.8 924.4 828.7 927.7 831.5 928.5M750.5 956.0C752.7 952.5 759.5 940.0 764.0 935.0C768.5 930.0 775.2 927.5 777.5 926.0M750.0 955.5L772.5 958.5"/>
<path fill="none" stroke="#ac7b53" stroke-width="2.5" stroke-opacity="0.45" stroke-linecap="round" stroke-linejoin="round" d="M1097.1 922.1C1104.0 917.3 1125.3 901.0 1138.7 893.7C1152.1 886.4 1163.3 882.9 1177.5 878.2C1191.7 873.6 1209.8 868.7 1224.0 865.8C1238.2 863.0 1251.1 863.3 1262.7 861.2C1274.4 859.1 1288.6 854.7 1293.7 853.4M1337.1 837.9C1342.8 840.3 1363.0 847.8 1371.2 851.9C1379.5 856.0 1379.7 859.5 1386.7 862.7C1393.7 866.0 1408.9 870.1 1413.3 871.6M900.0 1196.0C906.7 1190.0 929.5 1167.9 940.0 1160.0C950.5 1152.1 959.3 1150.4 963.1 1148.4"/>
<path fill="none" stroke="#ac7b53" stroke-width="1.5" stroke-opacity="0.2" stroke-linecap="round" stroke-linejoin="round" d="M1120.1 731.0C1118.3 746.5 1112.7 795.0 1109.3 824.0C1105.9 853.0 1101.2 891.5 1099.6 905.0M1138.7 727.9C1136.2 741.3 1128.4 782.1 1123.2 808.5C1118.1 834.8 1110.3 873.1 1107.7 886.0M1331.0 1311.9C1335.3 1300.0 1350.0 1259.5 1357.1 1240.5C1364.3 1221.4 1371.0 1204.8 1373.8 1197.6M1135.7 1311.9L1223.8 1402.4"/>
<path fill="none" stroke="#ac7b53" stroke-width="2" stroke-opacity="0.7" stroke-linecap="round" stroke-linejoin="round" d="M915.5 891.0C916.2 890.5 918.5 887.7 920.0 888.0C921.5 888.2 924.5 891.2 924.5 892.5C924.5 893.7 921.5 895.7 920.0 895.5C918.5 895.2 916.2 891.7 915.5 891.0M810.0 934.5C810.7 933.7 813.0 930.0 814.5 930.0C816.0 930.0 819.0 933.2 819.0 934.5C819.0 935.7 816.0 937.5 814.5 937.5C813.0 937.5 810.7 935.0 810.0 934.5"/>
<path fill="none" stroke="#ac7b53" stroke-width="4" stroke-opacity="0.8" stroke-linecap="round" stroke-linejoin="round" d="M891.5 960.0L893.0 982.5"/>
<path fill="none" stroke="#ac7b53" stroke-width="2" stroke-opacity="0.55" stroke-linecap="round" stroke-linejoin="round" d="M1078.8 1101.6C1083.0 1095.0 1095.3 1076.1 1104.0 1062.0C1112.7 1047.9 1122.0 1031.4 1131.0 1017.0C1140.0 1002.6 1149.0 989.1 1158.0 975.6C1167.0 962.1 1177.2 949.1 1185.0 936.0C1192.7 922.9 1201.3 903.4 1204.6 896.9"/>
<path fill="none" stroke="#ac7b53" stroke-width="1.5" stroke-opacity="0.3" stroke-linecap="round" stroke-linejoin="round" d="M1161.6 1031.4C1164.0 1023.0 1170.6 996.9 1176.0 981.0C1181.4 965.1 1189.0 950.1 1194.0 936.0C1199.0 921.9 1203.8 903.2 1205.8 896.6"/>
<path fill="none" stroke="#ac7b53" stroke-width="2" stroke-opacity="0.22" stroke-linecap="round" stroke-linejoin="round" d="M1373.8 1114.3C1373.4 1123.4 1372.2 1152.0 1371.4 1169.0C1370.6 1186.1 1372.2 1192.9 1369.0 1216.7C1365.9 1240.5 1356.0 1285.3 1352.4 1311.9C1348.8 1338.5 1348.4 1365.5 1347.6 1376.2"/>
<path fill="none" stroke="#ac7b53" stroke-width="2" stroke-opacity="0.2" stroke-linecap="round" stroke-linejoin="round" d="M1409.5 1145.2C1405.6 1157.1 1392.9 1192.9 1385.7 1216.7C1378.6 1240.5 1370.6 1257.1 1366.7 1288.1C1362.7 1319.0 1362.7 1383.3 1361.9 1402.4M1114.3 1245.2C1123.8 1256.3 1146.8 1285.7 1171.4 1311.9C1196.0 1338.1 1246.8 1387.3 1261.9 1402.4"/></g></g></svg>
<div id="gal" style="position:absolute;left:32.4px;top:16.9px;font-family:'Liberation Sans',sans-serif;font-size:32.7px;line-height:44px;color:#b4b4b4;-webkit-text-stroke:0.35px #b4b4b4;will-change:transform;white-space:nowrap;">Gallery</div>
</body></html>
